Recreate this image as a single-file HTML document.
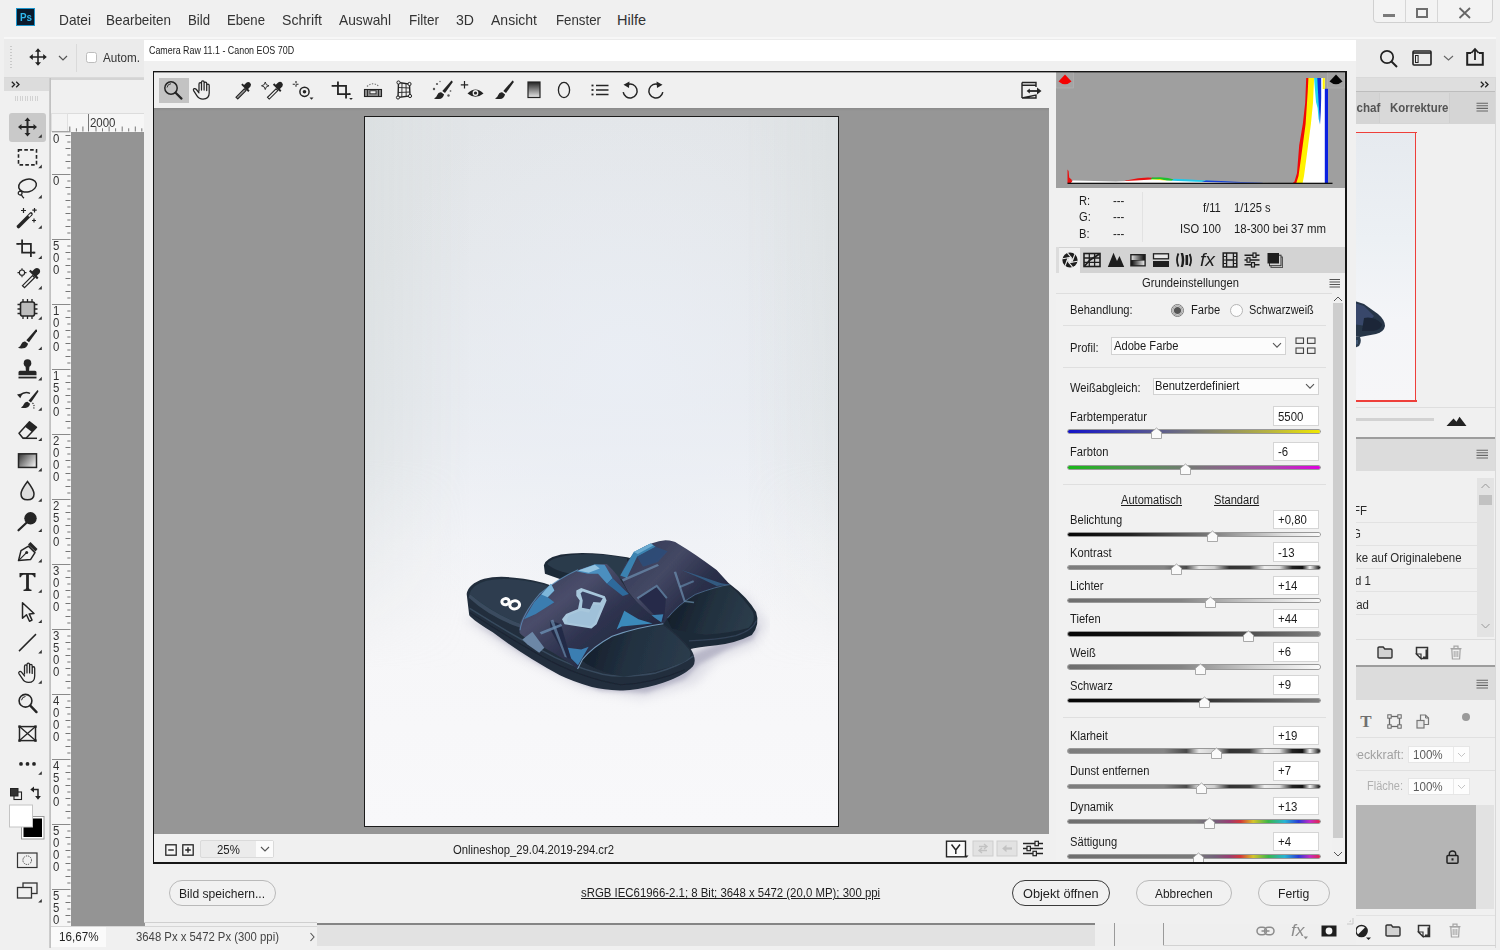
<!DOCTYPE html>
<html><head><meta charset="utf-8"><title>Camera Raw</title>
<style>
*{box-sizing:border-box;margin:0;padding:0}
html,body{width:1500px;height:950px;overflow:hidden;background:#f0f0f0;font-family:"Liberation Sans",sans-serif;color:#1a1a1a}
.a{position:absolute}
.t{position:absolute;white-space:pre;line-height:1;transform-origin:0 50%}
</style></head><body>
<div class="a" style="left:0;top:0;width:1500px;height:950px;background:#f0f0f0;overflow:hidden">
<div class="a" style="left:0px;top:0px;width:1500px;height:38px;background:#f0f0f0;"></div>
<div class="a" style="left:0px;top:37px;width:1500px;height:2px;background:#f7f7f7;"></div>
<div class="a" style="left:16px;top:8px;width:19px;height:18px;background:#0a1a2c;border:1px solid #1b95cc;"></div>
<div class="t" style="left:19.5px;top:11.6px;font-size:11px;color:#30b8ee;font-weight:bold;transform:scaleX(0.892);">Ps</div>
<div class="t" style="left:59.0px;top:13.2px;font-size:14.5px;color:#333;transform:scaleX(0.945);">Datei</div>
<div class="t" style="left:106.0px;top:13.2px;font-size:14.5px;color:#333;transform:scaleX(0.927);">Bearbeiten</div>
<div class="t" style="left:188.0px;top:13.2px;font-size:14.5px;color:#333;transform:scaleX(0.910);">Bild</div>
<div class="t" style="left:227.0px;top:13.2px;font-size:14.5px;color:#333;transform:scaleX(0.906);">Ebene</div>
<div class="t" style="left:282.0px;top:13.2px;font-size:14.5px;color:#333;transform:scaleX(0.973);">Schrift</div>
<div class="t" style="left:339.0px;top:13.2px;font-size:14.5px;color:#333;transform:scaleX(0.949);">Auswahl</div>
<div class="t" style="left:409.0px;top:13.2px;font-size:14.5px;color:#333;transform:scaleX(0.931);">Filter</div>
<div class="t" style="left:456.0px;top:13.2px;font-size:14.5px;color:#333;transform:scaleX(0.971);">3D</div>
<div class="t" style="left:491.0px;top:13.2px;font-size:14.5px;color:#333;transform:scaleX(0.967);">Ansicht</div>
<div class="t" style="left:556.0px;top:13.2px;font-size:14.5px;color:#333;transform:scaleX(0.915);">Fenster</div>
<div class="t" style="left:617.0px;top:13.2px;font-size:14.5px;color:#333;">Hilfe</div>
<div class="a" style="left:1373px;top:-4px;width:120px;height:27px;background:#f3f3f3;border:1px solid #d0d0d0;border-radius:4px;"></div>
<div class="a" style="left:1405px;top:0px;width:1px;height:23px;background:#d6d6d6;"></div>
<div class="a" style="left:1437px;top:0px;width:1px;height:23px;background:#d6d6d6;"></div>
<div class="a" style="left:1383px;top:14px;width:12px;height:3px;background:#7a7a7a;"></div>
<div class="a" style="left:1416px;top:8px;width:12px;height:10px;border:2px solid #6e6e6e;"></div>
<svg class="a" style="left:1458px;top:7px;" width="14" height="12" viewBox="0 0 14 12"><path d="M1.5 1 L12 11 M12 1 L1.5 11" stroke="#666" stroke-width="1.8" fill="none"/></svg>
<div class="a" style="left:4px;top:39px;width:1492px;height:38px;background:#ebebeb;"></div>
<div class="a" style="left:4px;top:77px;width:1492px;height:1px;background:#d9d9d9;"></div>
<div class="a" style="left:10px;top:46px;width:2px;height:24px;background:repeating-linear-gradient(#c9c9c9 0 1px,transparent 1px 3px);"></div>
<svg class="a" style="left:28px;top:47px;" width="20" height="20" viewBox="0 0 20 20"><path d="M10 1.2 L13 4.8 H10.8 V9.2 H15.2 V7 L18.8 10 L15.2 13 V10.8 H10.8 V15.2 H13 L10 18.8 L7 15.2 H9.2 V10.8 H4.8 V13 L1.2 10 L4.8 7 V9.2 H9.2 V4.8 H7 Z" fill="#222"/></svg>
<svg class="a" style="left:58px;top:55px;" width="10" height="7" viewBox="0 0 10 7"><path d="M1 1 L5 5 L9 1" stroke="#555" stroke-width="1.2" fill="none"/></svg>
<div class="a" style="left:76px;top:44px;width:1px;height:28px;background:#dadada;"></div>
<div class="a" style="left:86px;top:52px;width:11px;height:11px;background:#fff;border:1px solid #bdbdbd;border-radius:2.5px;"></div>
<div class="t" style="left:103.0px;top:51.9px;font-size:12.5px;color:#333;transform:scaleX(0.934);">Autom.</div>
<svg class="a" style="left:1378px;top:48px;" width="22" height="22" viewBox="0 0 22 22"><circle cx="9" cy="9" r="6.2" stroke="#222" stroke-width="1.7" fill="none"/><path d="M13.5 13.5 L19 19" stroke="#222" stroke-width="2"/></svg>
<svg class="a" style="left:1412px;top:50px;" width="22" height="16" viewBox="0 0 22 16"><rect x="1" y="1" width="18" height="14" stroke="#222" stroke-width="1.6" fill="none" rx="1"/><path d="M1 3 H19" stroke="#222" stroke-width="1.6"/><rect x="3.5" y="5.5" width="2.6" height="7" fill="none" stroke="#222" stroke-width="1"/></svg>
<svg class="a" style="left:1443px;top:55px;" width="11" height="7" viewBox="0 0 11 7"><path d="M1 1 L5.5 5 L10 1" stroke="#666" stroke-width="1.1" fill="none"/></svg>
<svg class="a" style="left:1465px;top:47px;" width="20" height="20" viewBox="0 0 20 20"><path d="M6 6 H2.2 V17.8 H17.8 V6 H14" stroke="#222" stroke-width="2" fill="none"/><path d="M10 13 V2.5 M6.3 6 L10 2 L13.7 6" stroke="#222" stroke-width="1.8" fill="none"/></svg>
<div class="a" style="left:0px;top:0px;width:4px;height:950px;background:#f0f0f0;"></div>
<div class="a" style="left:1496px;top:0px;width:4px;height:950px;background:#f0f0f0;"></div>
<div class="a" style="left:51px;top:78px;width:94px;height:36px;background:#f0f0f0;"></div>
<div class="a" style="left:51px;top:78px;width:1305px;height:1.5px;background:#d4d4d4;"></div>
<div class="a" style="left:51px;top:113px;width:94px;height:19px;background:#f6f6f6;"></div>
<div class="a" style="left:51px;top:113px;width:94px;height:1px;background:#dcdcdc;"></div>
<div class="a" style="left:51px;top:131px;width:20px;height:796px;background:#f6f6f6;"></div>
<div class="a" style="left:51px;top:113px;width:16.5px;height:18.5px;background:#f3f3f3;border:1px solid #e0e0e0;"></div>
<div class="a" style="left:70.5px;top:131.5px;width:74.5px;height:795px;background:#949494;"></div>
<svg class="a" style="left:51px;top:113px;" width="94" height="814" viewBox="0 0 94 814"><path d="M37.5 1 V18.5" stroke="#777" stroke-width="1"/><path d="M18.8 13.5 V18.5" stroke="#777" stroke-width="1"/><path d="M25.4 15.3 V18.5" stroke="#777" stroke-width="1"/><path d="M31.9 13.5 V18.5" stroke="#777" stroke-width="1"/><path d="M45.0 13.5 V18.5" stroke="#777" stroke-width="1"/><path d="M51.5 15.3 V18.5" stroke="#777" stroke-width="1"/><path d="M58.1 13.5 V18.5" stroke="#777" stroke-width="1"/><path d="M64.6 15.3 V18.5" stroke="#777" stroke-width="1"/><path d="M71.2 13.5 V18.5" stroke="#777" stroke-width="1"/><path d="M77.7 15.3 V18.5" stroke="#777" stroke-width="1"/><path d="M84.3 13.5 V18.5" stroke="#777" stroke-width="1"/><path d="M90.8 15.3 V18.5" stroke="#777" stroke-width="1"/><path d="M1 18.8 H19.5" stroke="#8a8a8a" stroke-width="1"/><path d="M1 61.5 H19.5" stroke="#8a8a8a" stroke-width="1"/><path d="M1 126.5 H19.5" stroke="#8a8a8a" stroke-width="1"/><path d="M1 191.5 H19.5" stroke="#8a8a8a" stroke-width="1"/><path d="M1 256.5 H19.5" stroke="#8a8a8a" stroke-width="1"/><path d="M1 321.5 H19.5" stroke="#8a8a8a" stroke-width="1"/><path d="M1 386.5 H19.5" stroke="#8a8a8a" stroke-width="1"/><path d="M1 451.5 H19.5" stroke="#8a8a8a" stroke-width="1"/><path d="M1 516.5 H19.5" stroke="#8a8a8a" stroke-width="1"/><path d="M1 581.5 H19.5" stroke="#8a8a8a" stroke-width="1"/><path d="M1 646.5 H19.5" stroke="#8a8a8a" stroke-width="1"/><path d="M1 711.5 H19.5" stroke="#8a8a8a" stroke-width="1"/><path d="M1 776.5 H19.5" stroke="#8a8a8a" stroke-width="1"/><path d="M14.5 22.5 H19.5" stroke="#777" stroke-width="1"/><path d="M16.3 29.0 H19.5" stroke="#777" stroke-width="1"/><path d="M14.5 35.5 H19.5" stroke="#777" stroke-width="1"/><path d="M16.3 42.0 H19.5" stroke="#777" stroke-width="1"/><path d="M14.5 48.5 H19.5" stroke="#777" stroke-width="1"/><path d="M16.3 55.0 H19.5" stroke="#777" stroke-width="1"/><path d="M16.3 68.0 H19.5" stroke="#777" stroke-width="1"/><path d="M14.5 74.5 H19.5" stroke="#777" stroke-width="1"/><path d="M16.3 81.0 H19.5" stroke="#777" stroke-width="1"/><path d="M14.5 87.5 H19.5" stroke="#777" stroke-width="1"/><path d="M16.3 94.0 H19.5" stroke="#777" stroke-width="1"/><path d="M14.5 100.5 H19.5" stroke="#777" stroke-width="1"/><path d="M16.3 107.0 H19.5" stroke="#777" stroke-width="1"/><path d="M14.5 113.5 H19.5" stroke="#777" stroke-width="1"/><path d="M16.3 120.0 H19.5" stroke="#777" stroke-width="1"/><path d="M16.3 133.0 H19.5" stroke="#777" stroke-width="1"/><path d="M14.5 139.5 H19.5" stroke="#777" stroke-width="1"/><path d="M16.3 146.0 H19.5" stroke="#777" stroke-width="1"/><path d="M14.5 152.5 H19.5" stroke="#777" stroke-width="1"/><path d="M16.3 159.0 H19.5" stroke="#777" stroke-width="1"/><path d="M14.5 165.5 H19.5" stroke="#777" stroke-width="1"/><path d="M16.3 172.0 H19.5" stroke="#777" stroke-width="1"/><path d="M14.5 178.5 H19.5" stroke="#777" stroke-width="1"/><path d="M16.3 185.0 H19.5" stroke="#777" stroke-width="1"/><path d="M16.3 198.0 H19.5" stroke="#777" stroke-width="1"/><path d="M14.5 204.5 H19.5" stroke="#777" stroke-width="1"/><path d="M16.3 211.0 H19.5" stroke="#777" stroke-width="1"/><path d="M14.5 217.5 H19.5" stroke="#777" stroke-width="1"/><path d="M16.3 224.0 H19.5" stroke="#777" stroke-width="1"/><path d="M14.5 230.5 H19.5" stroke="#777" stroke-width="1"/><path d="M16.3 237.0 H19.5" stroke="#777" stroke-width="1"/><path d="M14.5 243.5 H19.5" stroke="#777" stroke-width="1"/><path d="M16.3 250.0 H19.5" stroke="#777" stroke-width="1"/><path d="M16.3 263.0 H19.5" stroke="#777" stroke-width="1"/><path d="M14.5 269.5 H19.5" stroke="#777" stroke-width="1"/><path d="M16.3 276.0 H19.5" stroke="#777" stroke-width="1"/><path d="M14.5 282.5 H19.5" stroke="#777" stroke-width="1"/><path d="M16.3 289.0 H19.5" stroke="#777" stroke-width="1"/><path d="M14.5 295.5 H19.5" stroke="#777" stroke-width="1"/><path d="M16.3 302.0 H19.5" stroke="#777" stroke-width="1"/><path d="M14.5 308.5 H19.5" stroke="#777" stroke-width="1"/><path d="M16.3 315.0 H19.5" stroke="#777" stroke-width="1"/><path d="M16.3 328.0 H19.5" stroke="#777" stroke-width="1"/><path d="M14.5 334.5 H19.5" stroke="#777" stroke-width="1"/><path d="M16.3 341.0 H19.5" stroke="#777" stroke-width="1"/><path d="M14.5 347.5 H19.5" stroke="#777" stroke-width="1"/><path d="M16.3 354.0 H19.5" stroke="#777" stroke-width="1"/><path d="M14.5 360.5 H19.5" stroke="#777" stroke-width="1"/><path d="M16.3 367.0 H19.5" stroke="#777" stroke-width="1"/><path d="M14.5 373.5 H19.5" stroke="#777" stroke-width="1"/><path d="M16.3 380.0 H19.5" stroke="#777" stroke-width="1"/><path d="M16.3 393.0 H19.5" stroke="#777" stroke-width="1"/><path d="M14.5 399.5 H19.5" stroke="#777" stroke-width="1"/><path d="M16.3 406.0 H19.5" stroke="#777" stroke-width="1"/><path d="M14.5 412.5 H19.5" stroke="#777" stroke-width="1"/><path d="M16.3 419.0 H19.5" stroke="#777" stroke-width="1"/><path d="M14.5 425.5 H19.5" stroke="#777" stroke-width="1"/><path d="M16.3 432.0 H19.5" stroke="#777" stroke-width="1"/><path d="M14.5 438.5 H19.5" stroke="#777" stroke-width="1"/><path d="M16.3 445.0 H19.5" stroke="#777" stroke-width="1"/><path d="M16.3 458.0 H19.5" stroke="#777" stroke-width="1"/><path d="M14.5 464.5 H19.5" stroke="#777" stroke-width="1"/><path d="M16.3 471.0 H19.5" stroke="#777" stroke-width="1"/><path d="M14.5 477.5 H19.5" stroke="#777" stroke-width="1"/><path d="M16.3 484.0 H19.5" stroke="#777" stroke-width="1"/><path d="M14.5 490.5 H19.5" stroke="#777" stroke-width="1"/><path d="M16.3 497.0 H19.5" stroke="#777" stroke-width="1"/><path d="M14.5 503.5 H19.5" stroke="#777" stroke-width="1"/><path d="M16.3 510.0 H19.5" stroke="#777" stroke-width="1"/><path d="M16.3 523.0 H19.5" stroke="#777" stroke-width="1"/><path d="M14.5 529.5 H19.5" stroke="#777" stroke-width="1"/><path d="M16.3 536.0 H19.5" stroke="#777" stroke-width="1"/><path d="M14.5 542.5 H19.5" stroke="#777" stroke-width="1"/><path d="M16.3 549.0 H19.5" stroke="#777" stroke-width="1"/><path d="M14.5 555.5 H19.5" stroke="#777" stroke-width="1"/><path d="M16.3 562.0 H19.5" stroke="#777" stroke-width="1"/><path d="M14.5 568.5 H19.5" stroke="#777" stroke-width="1"/><path d="M16.3 575.0 H19.5" stroke="#777" stroke-width="1"/><path d="M16.3 588.0 H19.5" stroke="#777" stroke-width="1"/><path d="M14.5 594.5 H19.5" stroke="#777" stroke-width="1"/><path d="M16.3 601.0 H19.5" stroke="#777" stroke-width="1"/><path d="M14.5 607.5 H19.5" stroke="#777" stroke-width="1"/><path d="M16.3 614.0 H19.5" stroke="#777" stroke-width="1"/><path d="M14.5 620.5 H19.5" stroke="#777" stroke-width="1"/><path d="M16.3 627.0 H19.5" stroke="#777" stroke-width="1"/><path d="M14.5 633.5 H19.5" stroke="#777" stroke-width="1"/><path d="M16.3 640.0 H19.5" stroke="#777" stroke-width="1"/><path d="M16.3 653.0 H19.5" stroke="#777" stroke-width="1"/><path d="M14.5 659.5 H19.5" stroke="#777" stroke-width="1"/><path d="M16.3 666.0 H19.5" stroke="#777" stroke-width="1"/><path d="M14.5 672.5 H19.5" stroke="#777" stroke-width="1"/><path d="M16.3 679.0 H19.5" stroke="#777" stroke-width="1"/><path d="M14.5 685.5 H19.5" stroke="#777" stroke-width="1"/><path d="M16.3 692.0 H19.5" stroke="#777" stroke-width="1"/><path d="M14.5 698.5 H19.5" stroke="#777" stroke-width="1"/><path d="M16.3 705.0 H19.5" stroke="#777" stroke-width="1"/><path d="M16.3 718.0 H19.5" stroke="#777" stroke-width="1"/><path d="M14.5 724.5 H19.5" stroke="#777" stroke-width="1"/><path d="M16.3 731.0 H19.5" stroke="#777" stroke-width="1"/><path d="M14.5 737.5 H19.5" stroke="#777" stroke-width="1"/><path d="M16.3 744.0 H19.5" stroke="#777" stroke-width="1"/><path d="M14.5 750.5 H19.5" stroke="#777" stroke-width="1"/><path d="M16.3 757.0 H19.5" stroke="#777" stroke-width="1"/><path d="M14.5 763.5 H19.5" stroke="#777" stroke-width="1"/><path d="M16.3 770.0 H19.5" stroke="#777" stroke-width="1"/><path d="M16.3 783.0 H19.5" stroke="#777" stroke-width="1"/><path d="M14.5 789.5 H19.5" stroke="#777" stroke-width="1"/><path d="M16.3 796.0 H19.5" stroke="#777" stroke-width="1"/><path d="M14.5 802.5 H19.5" stroke="#777" stroke-width="1"/><path d="M16.3 809.0 H19.5" stroke="#777" stroke-width="1"/></svg>
<div class="t" style="left:89.5px;top:117.1px;font-size:12px;color:#333;transform:scaleX(0.955);">2000</div>
<div class="t" style="left:52.5px;top:132.7px;font-size:12px;color:#333;transform:scaleX(0.950);">0</div>
<div class="t" style="left:52.5px;top:175.4px;font-size:12px;color:#333;transform:scaleX(0.950);">0</div>
<div class="t" style="left:52.5px;top:240.4px;font-size:12px;color:#333;transform:scaleX(0.950);">5</div>
<div class="t" style="left:52.5px;top:252.4px;font-size:12px;color:#333;transform:scaleX(0.950);">0</div>
<div class="t" style="left:52.5px;top:264.4px;font-size:12px;color:#333;transform:scaleX(0.950);">0</div>
<div class="t" style="left:52.5px;top:305.4px;font-size:12px;color:#333;transform:scaleX(0.950);">1</div>
<div class="t" style="left:52.5px;top:317.4px;font-size:12px;color:#333;transform:scaleX(0.950);">0</div>
<div class="t" style="left:52.5px;top:329.4px;font-size:12px;color:#333;transform:scaleX(0.950);">0</div>
<div class="t" style="left:52.5px;top:341.4px;font-size:12px;color:#333;transform:scaleX(0.950);">0</div>
<div class="t" style="left:52.5px;top:370.4px;font-size:12px;color:#333;transform:scaleX(0.950);">1</div>
<div class="t" style="left:52.5px;top:382.4px;font-size:12px;color:#333;transform:scaleX(0.950);">5</div>
<div class="t" style="left:52.5px;top:394.4px;font-size:12px;color:#333;transform:scaleX(0.950);">0</div>
<div class="t" style="left:52.5px;top:406.4px;font-size:12px;color:#333;transform:scaleX(0.950);">0</div>
<div class="t" style="left:52.5px;top:435.4px;font-size:12px;color:#333;transform:scaleX(0.950);">2</div>
<div class="t" style="left:52.5px;top:447.4px;font-size:12px;color:#333;transform:scaleX(0.950);">0</div>
<div class="t" style="left:52.5px;top:459.4px;font-size:12px;color:#333;transform:scaleX(0.950);">0</div>
<div class="t" style="left:52.5px;top:471.4px;font-size:12px;color:#333;transform:scaleX(0.950);">0</div>
<div class="t" style="left:52.5px;top:500.4px;font-size:12px;color:#333;transform:scaleX(0.950);">2</div>
<div class="t" style="left:52.5px;top:512.4px;font-size:12px;color:#333;transform:scaleX(0.950);">5</div>
<div class="t" style="left:52.5px;top:524.4px;font-size:12px;color:#333;transform:scaleX(0.950);">0</div>
<div class="t" style="left:52.5px;top:536.4px;font-size:12px;color:#333;transform:scaleX(0.950);">0</div>
<div class="t" style="left:52.5px;top:565.4px;font-size:12px;color:#333;transform:scaleX(0.950);">3</div>
<div class="t" style="left:52.5px;top:577.4px;font-size:12px;color:#333;transform:scaleX(0.950);">0</div>
<div class="t" style="left:52.5px;top:589.4px;font-size:12px;color:#333;transform:scaleX(0.950);">0</div>
<div class="t" style="left:52.5px;top:601.4px;font-size:12px;color:#333;transform:scaleX(0.950);">0</div>
<div class="t" style="left:52.5px;top:630.4px;font-size:12px;color:#333;transform:scaleX(0.950);">3</div>
<div class="t" style="left:52.5px;top:642.4px;font-size:12px;color:#333;transform:scaleX(0.950);">5</div>
<div class="t" style="left:52.5px;top:654.4px;font-size:12px;color:#333;transform:scaleX(0.950);">0</div>
<div class="t" style="left:52.5px;top:666.4px;font-size:12px;color:#333;transform:scaleX(0.950);">0</div>
<div class="t" style="left:52.5px;top:695.4px;font-size:12px;color:#333;transform:scaleX(0.950);">4</div>
<div class="t" style="left:52.5px;top:707.4px;font-size:12px;color:#333;transform:scaleX(0.950);">0</div>
<div class="t" style="left:52.5px;top:719.4px;font-size:12px;color:#333;transform:scaleX(0.950);">0</div>
<div class="t" style="left:52.5px;top:731.4px;font-size:12px;color:#333;transform:scaleX(0.950);">0</div>
<div class="t" style="left:52.5px;top:760.4px;font-size:12px;color:#333;transform:scaleX(0.950);">4</div>
<div class="t" style="left:52.5px;top:772.4px;font-size:12px;color:#333;transform:scaleX(0.950);">5</div>
<div class="t" style="left:52.5px;top:784.4px;font-size:12px;color:#333;transform:scaleX(0.950);">0</div>
<div class="t" style="left:52.5px;top:796.4px;font-size:12px;color:#333;transform:scaleX(0.950);">0</div>
<div class="t" style="left:52.5px;top:825.4px;font-size:12px;color:#333;transform:scaleX(0.950);">5</div>
<div class="t" style="left:52.5px;top:837.4px;font-size:12px;color:#333;transform:scaleX(0.950);">0</div>
<div class="t" style="left:52.5px;top:849.4px;font-size:12px;color:#333;transform:scaleX(0.950);">0</div>
<div class="t" style="left:52.5px;top:861.4px;font-size:12px;color:#333;transform:scaleX(0.950);">0</div>
<div class="t" style="left:52.5px;top:890.4px;font-size:12px;color:#333;transform:scaleX(0.950);">5</div>
<div class="t" style="left:52.5px;top:902.4px;font-size:12px;color:#333;transform:scaleX(0.950);">5</div>
<div class="t" style="left:52.5px;top:914.4px;font-size:12px;color:#333;transform:scaleX(0.950);">0</div>
<div class="a" style="left:51px;top:926.5px;width:1305px;height:21px;background:#f0f0f0;"></div>
<div class="a" style="left:51px;top:926.5px;width:55px;height:21px;background:#fafafa;"></div>
<div class="t" style="left:59.0px;top:930.5px;font-size:12.5px;color:#222;transform:scaleX(0.932);">16,67%</div>
<div class="t" style="left:135.5px;top:930.7px;font-size:12px;color:#444;transform:scaleX(0.944);">3648 Px x 5472 Px (300 ppi)</div>
<svg class="a" style="left:309px;top:932px;" width="7" height="10" viewBox="0 0 7 10"><path d="M1.5 1 L5 5 L1.5 9" stroke="#555" stroke-width="1.1" fill="none"/></svg>
<div class="a" style="left:51px;top:926px;width:1305px;height:1px;background:#d6d6d6;"></div>
<div class="a" style="left:0px;top:947px;width:1500px;height:3px;background:#f0f0f0;"></div>
<div class="a" style="left:4px;top:78px;width:46px;height:870px;background:#f0f0f0;"></div>
<div class="a" style="left:4px;top:78px;width:46px;height:13px;background:#dcdcdc;"></div>
<svg class="a" style="left:10.5px;top:81px;" width="10" height="7" viewBox="0 0 10 7"><path d="M0.8 0.8 L3.6 3.5 L0.8 6.2 M5.2 0.8 L8 3.5 L5.2 6.2" stroke="#222" stroke-width="1.3" fill="none"/></svg>
<div class="a" style="left:15px;top:96px;width:23px;height:5px;background:repeating-linear-gradient(90deg,#d2d2d2 0 1px,transparent 1px 2.5px);"></div>
<div class="a" style="left:49px;top:78px;width:2px;height:870px;background:linear-gradient(90deg,#d0d0d0,#bdbdbd);"></div>
<div class="a" style="left:8.5px;top:112.5px;width:37.5px;height:29px;background:#c9c9c9;border-radius:3px;"></div>
<svg class="a" style="left:4px;top:78px;" width="46" height="870" viewBox="0 0 46 870"><g transform="translate(23.5,49)"><path d="M0 -9.5 L3 -6 H1 V-1 H6 V-3 L9.5 0 L6 3 V1 H1 V6 H3 L0 9.5 L-3 6 H-1 V1 H-6 V3 L-9.5 0 L-6 -3 V-1 H-1 V-6 H-3 Z" fill="#252525"/></g><path d="M37.8 59.8 L37.8 56.2 L34.2 59.8 Z" fill="#333"/><g transform="translate(23.5,79.33)"><rect x="-9" y="-7.5" width="18" height="15" fill="none" stroke="#252525" stroke-width="1.6" stroke-dasharray="3.6 2.2"/></g><path d="M37.8 90.13 L37.8 86.53 L34.2 90.13 Z" fill="#333"/><g transform="translate(23.5,109.66)"><ellipse cx="0.5" cy="-2" rx="9" ry="6.3" transform="rotate(-14)" fill="none" stroke="#252525" stroke-width="1.5"/><path d="M-7 3.5 Q-10 4 -9 6.5 Q-7 8.5 -5.5 6 Q-5 4 -7 3.5 M-6 7 Q-5 9.5 -3.5 10.5" fill="none" stroke="#252525" stroke-width="1.3"/></g><path d="M37.8 120.46 L37.8 116.86 L34.2 120.46 Z" fill="#333"/><g transform="translate(23.5,139.99)"><path d="M-9 8.5 L3.5 -4" stroke="#252525" stroke-width="3.6" stroke-linecap="round"/><path d="M1.2 -1.6 L3.6 -4" stroke="#f0f0f0" stroke-width="1.6"/><path d="M-4 -10 V-5 M-6.5 -7.5 H-1.5 M7 -10 V-5.6 M4.8 -7.8 H9.2 M6.5 0.5 V4.5 M4.5 2.5 H8.5" stroke="#252525" stroke-width="1.2"/></g><path d="M37.8 150.79 L37.8 147.19 L34.2 150.79 Z" fill="#333"/><g transform="translate(22.5,170.32)"><g transform="scale(0.88)"><path d="M-5 -10 V5 H10 M-10 -5 H5 V10" fill="none" stroke="#252525" stroke-width="2"/><path d="M-11.5 -5 H-9 M7.5 5 H9" stroke="#252525" stroke-width="2"/></g></g><path d="M37.8 181.12 L37.8 177.52 L34.2 181.12 Z" fill="#333"/><g transform="translate(26,200.65)"><path d="M-5.5 9 L-7.5 7 L2.5 -3 L4.5 -1 Z" fill="#f0f0f0" stroke="#252525" stroke-width="1.3"/><path d="M1 -5.5 L7 0.5 L8.5 -1 L6.8 -2.8 L9.5 -5.5 Q11 -8 9 -10 Q7 -11.5 4.8 -10 L2.2 -7.4 L0.5 -9 L-1 -7.5 Z" fill="#252525"/><circle cx="-8" cy="-6" r="2.6" fill="none" stroke="#252525" stroke-width="1.1"/><path d="M-8 -10.5 V-8.6 M-8 -3.4 V-1.5 M-12.5 -6 H-10.6 M-5.4 -6 H-3.5" stroke="#252525" stroke-width="1.1"/></g><path d="M37.8 211.45 L37.8 207.85 L34.2 211.45 Z" fill="#333"/><g transform="translate(23.5,230.98)"><rect x="-7" y="-7" width="14" height="14" rx="2" fill="#bdbdbd" stroke="#252525" stroke-width="1.6"/><path d="M-4.5 -10 V-7 M0 -10 V-7 M4.5 -10 V-7 M-4.5 7 V10 M0 7 V10 M4.5 7 V10 M-10 -4.5 H-7 M-10 0 H-7 M-10 4.5 H-7 M7 -4.5 H10 M7 0 H10 M7 4.5 H10" stroke="#252525" stroke-width="1.3"/></g><path d="M37.8 241.78 L37.8 238.18 L34.2 241.78 Z" fill="#333"/><g transform="translate(23.5,261.31)"><path d="M8.5 -10 Q10 -9.5 9.5 -8 L1.5 3 L-1.2 1 Z" fill="#252525"/><path d="M-2.3 2.2 L0.6 4.4 Q-0.5 8.5 -4.5 9 Q-7.5 9.3 -9.5 8.5 Q-6.8 7 -6.3 5 Q-5.2 1.8 -2.3 2.2 Z" fill="#252525"/></g><path d="M37.8 272.11 L37.8 268.51 L34.2 272.11 Z" fill="#333"/><g transform="translate(23.5,291.64)"><circle cx="0" cy="-6.5" r="3.8" fill="#252525"/><path d="M-2 -4 H2 L1.6 1 H7.5 Q9 1 9 2.5 V5.5 H-9 V2.5 Q-9 1 -7.5 1 H-1.6 Z" fill="#252525"/><rect x="-9" y="7" width="18" height="1.8" fill="#252525"/></g><path d="M37.8 302.44 L37.8 298.84 L34.2 302.44 Z" fill="#333"/><g transform="translate(23.5,321.97)"><path d="M10 -10 Q11.3 -9.5 10.8 -8.2 L3.5 2.5 L1 0.7 Z" fill="#252525"/><path d="M0 1.8 L2.6 3.8 Q1.6 7.5 -2 8 Q-4.8 8.3 -6.6 7.5 Q-4.2 6.2 -3.7 4.4 Q-2.7 1.5 0 1.8 Z" fill="#252525"/><path d="M-7.5 -4.5 Q-3 -9 2.5 -6.5" fill="none" stroke="#252525" stroke-width="1.4"/><path d="M-10.5 -5.5 L-5 -6.8 L-7.2 -1.8 Z" fill="#252525"/><path d="M5 3 Q7.5 5.5 6 9" fill="none" stroke="#252525" stroke-width="1.1" stroke-dasharray="1.2 1.2"/></g><path d="M37.8 332.77 L37.8 329.17 L34.2 332.77 Z" fill="#333"/><g transform="translate(23.5,352.3)"><path d="M-8.5 3 L2 -8.5 L9 -3 L-1.5 8 H-4.5 Z" fill="#f0f0f0" stroke="#252525" stroke-width="1.5" stroke-linejoin="round"/><path d="M2 -8.5 L9 -3 L4.5 1.8 L-2.5 -3.6 Z" fill="#252525"/><path d="M-4.5 8 H9.5" stroke="#252525" stroke-width="1.5"/></g><path d="M37.8 363.1 L37.8 359.5 L34.2 363.1 Z" fill="#333"/><g transform="translate(23.5,382.63)"><defs><linearGradient id="tg" x1="0" x2="1" y1="0" y2="0.6"><stop offset="0" stop-color="#333"/><stop offset="1" stop-color="#e2e2e2"/></linearGradient></defs><rect x="-9" y="-6.8" width="18" height="13.6" fill="url(#tg)" stroke="#252525" stroke-width="1.5"/></g><path d="M37.8 393.43 L37.8 389.83 L34.2 393.43 Z" fill="#333"/><g transform="translate(23.5,412.96)"><path d="M0 -9.5 Q6.5 -1 6.5 3 Q6.5 8.8 0 8.8 Q-6.5 8.8 -6.5 3 Q-6.5 -1 0 -9.5 Z" fill="#dedede" stroke="#252525" stroke-width="1.5"/></g><path d="M37.8 423.76 L37.8 420.16 L34.2 423.76 Z" fill="#333"/><g transform="translate(23.5,443.29)"><circle cx="3" cy="-3" r="6.2" fill="#252525"/><path d="M-1 1.5 L-9 9" stroke="#252525" stroke-width="2.2" stroke-linecap="round"/></g><path d="M37.8 454.09 L37.8 450.49 L34.2 454.09 Z" fill="#333"/><g transform="translate(23.5,473.62)"><path d="M-9 9 L-6.5 -1 L1 -5.5 L7.5 1 L3 8 Z" fill="#f0f0f0" stroke="#252525" stroke-width="1.5" stroke-linejoin="round"/><path d="M-9 9 L-1.5 1.5" stroke="#252525" stroke-width="1.2"/><circle cx="-0.8" cy="0.8" r="1.5" fill="#252525"/><path d="M0.5 -7 L3 -9.5 L10 -2.5 L8 0 Z" fill="#252525"/></g><path d="M37.8 484.42 L37.8 480.82 L34.2 484.42 Z" fill="#333"/><g transform="translate(23.5,503.95)"><path d="M-8 -9 H8 V-4.6 H6.6 Q6.3 -7.2 4 -7.2 H1.4 V6 Q1.4 7.6 4 7.7 V9 H-4 V7.7 Q-1.4 7.6 -1.4 6 V-7.2 H-4 Q-6.3 -7.2 -6.6 -4.6 H-8 Z" fill="#252525"/></g><path d="M37.8 514.75 L37.8 511.15 L34.2 514.75 Z" fill="#333"/><g transform="translate(23.5,534.28)"><path d="M-5 -9.5 L-5 6 L-1 2.5 L2 9 L4.5 7.8 L1.7 1.6 L6.5 1.2 Z" fill="#f0f0f0" stroke="#252525" stroke-width="1.5" stroke-linejoin="round"/></g><path d="M37.8 545.08 L37.8 541.48 L34.2 545.08 Z" fill="#333"/><g transform="translate(23.5,564.61)"><path d="M-8.5 8.5 L8.5 -8.5" stroke="#252525" stroke-width="1.5"/></g><path d="M37.8 575.41 L37.8 571.81 L34.2 575.41 Z" fill="#333"/><g transform="translate(23.5,594.94)"><path d="M-3 1 V-6.5 Q-3 -8 -1.7 -8 Q-0.5 -8 -0.5 -6.5 V-8.2 Q-0.5 -9.8 0.8 -9.8 Q2.1 -9.8 2.1 -8.2 V-7 Q2.1 -8.6 3.4 -8.6 Q4.7 -8.6 4.7 -7 V-4.8 Q4.7 -6.2 5.9 -6.2 Q7.2 -6.2 7.2 -4.8 V3 Q7.2 9.5 1 9.5 Q-3 9.5 -5 6 L-8.6 0.6 Q-9.2 -0.8 -8 -1.4 Q-6.8 -1.8 -5.8 -0.6 L-3 3 M-0.5 -6.5 V0 M2.1 -7 V0 M4.7 -4.8 V0.5" fill="none" stroke="#252525" stroke-width="1.3" stroke-linejoin="round" stroke-linecap="round"/></g><path d="M37.8 605.74 L37.8 602.14 L34.2 605.74 Z" fill="#333"/><g transform="translate(23.5,625.27)"><circle cx="-2" cy="-2.5" r="6.4" fill="none" stroke="#252525" stroke-width="1.6"/><path d="M2.8 2.4 L9 8.8" stroke="#252525" stroke-width="2.4" stroke-linecap="round"/><path d="M-6 -3 Q-5.5 -6.5 -2 -6.8" fill="none" stroke="#252525" stroke-width="1"/></g><g transform="translate(23.5,655.6)"><rect x="-8" y="-7" width="16" height="14" fill="none" stroke="#252525" stroke-width="1.5"/><path d="M-8 -7 L8 7 M8 -7 L-8 7" stroke="#252525" stroke-width="1.3"/><rect x="-9.2" y="-8.2" width="2.4" height="2.4" fill="#252525"/><rect x="6.8" y="-8.2" width="2.4" height="2.4" fill="#252525"/><rect x="-9.2" y="5.8" width="2.4" height="2.4" fill="#252525"/><rect x="6.8" y="5.8" width="2.4" height="2.4" fill="#252525"/></g><g transform="translate(23.5,685.93)"><circle cx="-6.5" cy="0" r="1.9" fill="#252525"/><circle cx="0" cy="0" r="1.9" fill="#252525"/><circle cx="6.5" cy="0" r="1.9" fill="#252525"/></g><path d="M37.8 696.73 L37.8 693.13 L34.2 696.73 Z" fill="#333"/><rect x="10" y="714" width="7.5" height="7.5" fill="#f0f0f0" stroke="#222" stroke-width="1.1"/><rect x="6.5" y="710.5" width="7.5" height="7.5" fill="#333" stroke="#222" stroke-width="1"/><path d="M29.5 711.5 H34 V719" fill="none" stroke="#222" stroke-width="1.5"/><path d="M26.3 711.5 L30 708.6 V714.4 Z M34 721.8 L31.1 718 H36.9 Z" fill="#222"/><rect x="17.5" y="738.5" width="22.5" height="22.5" fill="#fff" stroke="#9a9a9a" stroke-width="1"/><rect x="19.5" y="740.5" width="18.5" height="18.5" fill="#000"/><rect x="5.5" y="727" width="23" height="22" fill="#fff" stroke="#c4c4c4" stroke-width="1"/><rect x="13.5" y="775" width="19.5" height="14.5" fill="none" stroke="#333" stroke-width="1.2"/><circle cx="23.2" cy="782.2" r="4.3" fill="none" stroke="#333" stroke-width="0.9" stroke-dasharray="1.3 1"/><rect x="19" y="805" width="14" height="10.5" fill="#f0f0f0" stroke="#333" stroke-width="1.3"/><rect x="13.5" y="809.5" width="14" height="10.5" fill="#f0f0f0" stroke="#333" stroke-width="1.3"/><path d="M37.8 824.5 L37.8 820.9 L34.2 824.5 Z" fill="#333"/></svg>
<div class="a" style="left:1356px;top:78px;width:140px;height:870px;background:#f0f0f0;"></div>
<div class="a" style="left:1494.5px;top:78px;width:1.5px;height:870px;background:#d9d9d9;"></div>
<div class="a" style="left:1356px;top:78px;width:139px;height:13px;background:#dedede;"></div>
<svg class="a" style="left:1479.5px;top:81px;" width="10" height="7" viewBox="0 0 10 7"><path d="M0.8 0.8 L3.6 3.5 L0.8 6.2 M5.2 0.8 L8 3.5 L5.2 6.2" stroke="#222" stroke-width="1.3" fill="none"/></svg>
<div class="a" style="left:1356px;top:90.5px;width:139px;height:1.5px;background:#bdbdbd;"></div>
<div class="a" style="left:1356px;top:92px;width:139px;height:32px;background:#d5d5d5;"></div>
<div class="a" style="left:1380px;top:93px;width:69px;height:30px;background:#d9d9d9;"></div>
<div class="a" style="left:1379.3px;top:93px;width:1px;height:30px;background:#cfcfcf;"></div>
<div class="a" style="left:1449px;top:93px;width:1px;height:30px;background:#cfcfcf;"></div>
<div class="a" style="left:1356px;top:92px;width:30px;height:32px;overflow:hidden"><div class="t" style="left:-6.0px;top:9.7px;font-size:12.5px;color:#555;font-weight:bold;transform:scaleX(0.930);">schaf</div>
</div>
<div class="t" style="left:1389.8px;top:101.7px;font-size:12.5px;color:#555;font-weight:bold;transform:scaleX(0.915);">Korrekture</div>
<svg class="a" style="left:1476px;top:102px;" width="13" height="10" viewBox="0 0 13 10"><path d="M0.5 1.2 H12 M0.5 3.8 H12 M0.5 6.4 H12 M0.5 9 H12" stroke="#666" stroke-width="1.1"/></svg>
<div class="a" style="left:1356px;top:131.5px;width:60px;height:270px;overflow:hidden;background:linear-gradient(180deg,#e6eaef 0%,#ecf0f4 40%,#f4f5f8 70%,#f6f6f8 100%)"><svg class="a" style="left:-4px;top:164px" width="36" height="56" viewBox="0 0 36 56"><defs><filter id="nb"><feGaussianBlur stdDeviation="0.5"/></filter></defs><g filter="url(#nb)"><path d="M0 4 L12 8 L26 18 Q33 24 33 30 Q32 36 24 38 L8 41 L0 40 Z" fill="#253447"/><path d="M0 6 L12 10 L22 20 L14 30 L0 28 Z" fill="#37476a"/><path d="M12 22 Q22 20 30 28 Q30 33 22 35 L10 35 Z" fill="#1c2838"/><path d="M0 40 L8 41 Q10 46 7 50 L0 53 Z" fill="#2a3a4d"/><path d="M0 44 L6 44 L6 48 L0 50 Z" fill="#3f5673"/></g></svg></div>
<div class="a" style="left:1356px;top:131.5px;width:60.5px;height:1.6px;background:#ee3f3a;"></div>
<div class="a" style="left:1356px;top:400px;width:60.5px;height:1.6px;background:#ee3f3a;"></div>
<div class="a" style="left:1414.8px;top:131.5px;width:1.7px;height:270px;background:#ee3f3a;"></div>
<div class="a" style="left:1356px;top:406.5px;width:139px;height:1px;background:#dedede;"></div>
<div class="a" style="left:1356px;top:417.5px;width:78px;height:3px;background:#d2d2d2;"></div>
<svg class="a" style="left:1446px;top:415.5px;" width="21" height="11" viewBox="0 0 21 11"><path d="M0.5 10 L7.5 2.5 L10.5 5.8 L13.5 0.8 L20.5 10 Z" fill="#222"/></svg>
<div class="a" style="left:1356px;top:436.5px;width:139px;height:2px;background:#9d9d9d;"></div>
<div class="a" style="left:1356px;top:438.5px;width:139px;height:32.5px;background:#dcdcdc;"></div>
<svg class="a" style="left:1476px;top:449px;" width="13" height="10" viewBox="0 0 13 10"><path d="M0.5 1.2 H12 M0.5 3.8 H12 M0.5 6.4 H12 M0.5 9 H12" stroke="#666" stroke-width="1.1"/></svg>
<div class="a" style="left:1477px;top:478px;width:17px;height:159px;background:#e3e3e3;"></div>
<svg class="a" style="left:1480px;top:482px;" width="11" height="8" viewBox="0 0 11 8"><path d="M1.5 6 L5.5 2 L9.5 6" stroke="#999" stroke-width="1" fill="none"/></svg>
<div class="a" style="left:1479px;top:495px;width:12.5px;height:9.5px;background:#c2c2c2;"></div>
<svg class="a" style="left:1480px;top:622px;" width="11" height="8" viewBox="0 0 11 8"><path d="M1.5 2 L5.5 6 L9.5 2" stroke="#999" stroke-width="1" fill="none"/></svg>
<div class="a" style="left:1356px;top:478px;width:121px;height:160px;overflow:hidden"><div class="t" style="left:-3.5px;top:26.5px;font-size:12.5px;color:#2a2a2a;transform:scaleX(0.915);">FF</div>
<div class="t" style="left:-4.5px;top:49.5px;font-size:12.5px;color:#2a2a2a;transform:scaleX(0.915);">G</div>
<div class="t" style="left:0.0px;top:73.5px;font-size:12.5px;color:#2a2a2a;transform:scaleX(0.915);">ke auf Originalebene</div>
<div class="t" style="left:-1.5px;top:96.5px;font-size:12.5px;color:#2a2a2a;transform:scaleX(0.915);">d 1</div>
<div class="t" style="left:-3.0px;top:120.5px;font-size:12.5px;color:#2a2a2a;transform:scaleX(0.915);">fad</div>
</div>
<div class="a" style="left:1356px;top:521.7px;width:121px;height:1px;background:#e2e2e2;"></div>
<div class="a" style="left:1356px;top:544.8px;width:121px;height:1px;background:#e2e2e2;"></div>
<div class="a" style="left:1356px;top:568px;width:121px;height:1px;background:#e2e2e2;"></div>
<div class="a" style="left:1356px;top:591px;width:121px;height:1px;background:#e2e2e2;"></div>
<div class="a" style="left:1356px;top:614.3px;width:121px;height:1px;background:#e2e2e2;"></div>
<div class="a" style="left:1356px;top:638.5px;width:139px;height:1px;background:#dcdcdc;"></div>
<svg class="a" style="left:1376.5px;top:646px;" width="16" height="13" viewBox="0 0 16 13"><path d="M1 2.2 Q1 1 2.2 1 H6.2 L7.8 3 H13.8 Q15 3 15 4.2 V11 Q15 12 13.8 12 H2.2 Q1 12 1 11 Z" fill="#d2d2d2" stroke="#333" stroke-width="1.4"/></svg>
<svg class="a" style="left:1414.5px;top:645.5px;" width="14" height="14" viewBox="0 0 14 14"><path d="M1.5 1.5 H12.5 V12.5 H6 L1.5 8 Z" fill="none" stroke="#333" stroke-width="1.5"/><path d="M1.5 8 H6 V12.5 Z" fill="#f6f6f6" stroke="#333" stroke-width="1.2"/><path d="M10.5 3.5 H12.5 V12.5 H8 V10.5 H10.5 Z" fill="#333"/></svg>
<svg class="a" style="left:1449.5px;top:645px;" width="12" height="15" viewBox="0 0 12 15"><path d="M1.8 4 H10.2 L9.6 14 H2.4 Z" fill="none" stroke="#a5a5a5" stroke-width="1.2"/><path d="M0.5 3.6 H11.5 M4 3.2 V1.2 H8 V3.2" fill="none" stroke="#a5a5a5" stroke-width="1.2"/><path d="M4.2 6 V12 M6 6 V12 M7.8 6 V12" stroke="#a5a5a5" stroke-width="1"/></svg>
<div class="a" style="left:1356px;top:664.5px;width:139px;height:2px;background:#9d9d9d;"></div>
<div class="a" style="left:1356px;top:666.5px;width:139px;height:33px;background:#dcdcdc;"></div>
<svg class="a" style="left:1476px;top:679px;" width="13" height="10" viewBox="0 0 13 10"><path d="M0.5 1.2 H12 M0.5 3.8 H12 M0.5 6.4 H12 M0.5 9 H12" stroke="#666" stroke-width="1.1"/></svg>
<div class="t" style="left:1360.3px;top:712.5px;font-size:17px;color:#6f6f6f;font-weight:bold;font-family:'Liberation Serif',serif;">T</div>
<svg class="a" style="left:1386.5px;top:713.5px;" width="15" height="15" viewBox="0 0 15 15"><rect x="2.5" y="2.5" width="10" height="10" fill="none" stroke="#666" stroke-width="1.3"/><rect x="0.8" y="0.8" width="3.4" height="3.4" fill="#f0f0f0" stroke="#666"/><rect x="10.8" y="0.8" width="3.4" height="3.4" fill="#f0f0f0" stroke="#666"/><rect x="0.8" y="10.8" width="3.4" height="3.4" fill="#f0f0f0" stroke="#666"/><rect x="10.8" y="10.8" width="3.4" height="3.4" fill="#f0f0f0" stroke="#666"/></svg>
<svg class="a" style="left:1416px;top:713.5px;" width="14" height="15" viewBox="0 0 14 15"><path d="M4.5 1 H9.5 L12.5 4 V10.5 H4.5 Z" fill="#f0f0f0" stroke="#777" stroke-width="1.2"/><rect x="1" y="6.5" width="7" height="7.5" fill="#e6e6e6" stroke="#777" stroke-width="1.2"/><path d="M9.5 1 V4 H12.5" fill="none" stroke="#777" stroke-width="1"/></svg>
<div class="a" style="left:1461.8px;top:712.5px;width:8px;height:8px;background:#9a9a9a;border-radius:4px;"></div>
<div class="a" style="left:1356px;top:737px;width:139px;height:1px;background:#e0e0e0;"></div>
<div class="a" style="left:1356px;top:745px;width:50px;height:20px;overflow:hidden"><div class="t" style="left:-8.5px;top:3.7px;font-size:12.5px;color:#a2a2a2;transform:scaleX(0.995);">Deckkraft:</div>
</div>
<div class="a" style="left:1408.4px;top:746px;width:61.6px;height:16.5px;background:#fdfdfd;border:1px solid #e6e6e6;"></div>
<div class="a" style="left:1453px;top:747px;width:1px;height:14.5px;background:#e9e9e9;"></div>
<div class="t" style="left:1413.3px;top:748.5px;font-size:12.5px;color:#5c5c5c;transform:scaleX(0.929);">100%</div>
<svg class="a" style="left:1457px;top:752px;" width="9" height="6" viewBox="0 0 9 6"><path d="M1 1 L4.5 4.5 L8 1" stroke="#c4c4c4" stroke-width="1" fill="none"/></svg>
<div class="a" style="left:1408.4px;top:778px;width:61.6px;height:16.5px;background:#fdfdfd;border:1px solid #e6e6e6;"></div>
<div class="a" style="left:1453px;top:779px;width:1px;height:14.5px;background:#e9e9e9;"></div>
<div class="t" style="left:1413.3px;top:780.5px;font-size:12.5px;color:#5c5c5c;transform:scaleX(0.929);">100%</div>
<svg class="a" style="left:1457px;top:784px;" width="9" height="6" viewBox="0 0 9 6"><path d="M1 1 L4.5 4.5 L8 1" stroke="#c4c4c4" stroke-width="1" fill="none"/></svg>
<div class="a" style="left:1356px;top:770px;width:139px;height:1px;background:#e0e0e0;"></div>
<div class="t" style="left:1367.4px;top:780.2px;font-size:12.5px;color:#b0b0b0;transform:scaleX(0.878);">Fläche:</div>
<div class="a" style="left:1356px;top:805px;width:120px;height:104px;background:#b5b5b5;"></div>
<div class="a" style="left:1476px;top:805px;width:18px;height:104px;background:#e2e2e2;"></div>
<svg class="a" style="left:1445.5px;top:850px;" width="13" height="14" viewBox="0 0 13 14"><rect x="1" y="5.6" width="11" height="7.6" rx="1" fill="none" stroke="#222" stroke-width="1.5"/><path d="M3.3 5.6 V3.8 Q3.3 1 6.5 1 Q9.7 1 9.7 3.8 V5.6" fill="none" stroke="#222" stroke-width="1.4"/><rect x="5.5" y="8.3" width="2" height="2.2" fill="#222"/></svg>
<div class="a" style="left:1356px;top:915px;width:139px;height:1px;background:#e2e2e2;"></div>
<svg class="a" style="left:1354px;top:923.5px;" width="18" height="17" viewBox="0 0 18 17"><circle cx="7.5" cy="7" r="5.6" fill="#f4f4f4" stroke="#222" stroke-width="1.5"/><path d="M11.5 3 A5.6 5.6 0 0 1 3.5 11 Z" fill="#222"/><path d="M12 13.5 H17 L14.5 16 Z" fill="#222"/></svg>
<svg class="a" style="left:1384.5px;top:924px;" width="16" height="13" viewBox="0 0 16 13"><path d="M1 2.2 Q1 1 2.2 1 H6.2 L7.8 3 H13.8 Q15 3 15 4.2 V11 Q15 12 13.8 12 H2.2 Q1 12 1 11 Z" fill="#d2d2d2" stroke="#333" stroke-width="1.4"/></svg>
<svg class="a" style="left:1417px;top:923.5px;" width="14" height="14" viewBox="0 0 14 14"><path d="M1.5 1.5 H12.5 V12.5 H6 L1.5 8 Z" fill="none" stroke="#333" stroke-width="1.5"/><path d="M1.5 8 H6 V12.5 Z" fill="#f6f6f6" stroke="#333" stroke-width="1.2"/><path d="M10.5 3.5 H12.5 V12.5 H8 V10.5 H10.5 Z" fill="#333"/></svg>
<svg class="a" style="left:1449px;top:923px;" width="12" height="15" viewBox="0 0 12 15"><path d="M1.8 4 H10.2 L9.6 14 H2.4 Z" fill="none" stroke="#a5a5a5" stroke-width="1.2"/><path d="M0.5 3.6 H11.5 M4 3.2 V1.2 H8 V3.2" fill="none" stroke="#a5a5a5" stroke-width="1.2"/><path d="M4.2 6 V12 M6 6 V12 M7.8 6 V12" stroke="#a5a5a5" stroke-width="1"/></svg>
<div class="a" style="left:144px;top:40px;width:1212px;height:21px;background:#fff;"></div>
<div class="t" style="left:149.0px;top:44.6px;font-size:11px;color:#222;transform:scaleX(0.808);">Camera Raw 11.1 - Canon EOS 70D</div>
<div class="a" style="left:144px;top:61px;width:1212px;height:861px;background:#f0f0f0;"></div>
<div class="a" style="left:153px;top:71px;width:1193px;height:792px;background:#f0f0f0;"></div>
<div class="a" style="left:154px;top:72px;width:895px;height:36px;background:#f0f0f0;"></div>
<div class="a" style="left:154px;top:108px;width:895px;height:726px;background:#969696;"></div>
<div class="a" style="left:154px;top:108px;width:895px;height:3px;background:linear-gradient(#8a8a8a,#969696);"></div>
<div class="a" style="left:364px;top:116px;width:475px;height:711px;background:#1c1c1c;"></div>
<div class="a" style="left:365px;top:117px;width:473px;height:709px;background:radial-gradient(ellipse 55% 42% at 55% 36%,rgba(234,238,245,0.9),rgba(234,238,245,0) 100%),linear-gradient(180deg,#e2e5e8 0%,#e4e7ea 20%,#e8ebef 40%,#eef0f4 51%,#f3f4f7 60%,#f6f6f8 72%,#f8f8fa 100%);overflow:hidden"><div class="a" style="left:0;top:0;width:473px;height:709px;background:linear-gradient(90deg,rgba(212,218,218,0.45) 0%,rgba(214,220,220,0) 22%,rgba(214,220,220,0) 80%,rgba(212,218,218,0.40) 100%);-webkit-mask-image:linear-gradient(180deg,#000 0%,#000 48%,transparent 78%);mask-image:linear-gradient(180deg,#000 0%,#000 48%,transparent 78%)"></div><svg class="a" style="left:85px;top:413px" width="320" height="180" viewBox="0 0 1500 844"><defs>
<filter id="bl" x="-10%" y="-10%" width="120%" height="120%"><feGaussianBlur stdDeviation="2.4"/></filter>
<filter id="bl2" x="-10%" y="-10%" width="120%" height="120%"><feGaussianBlur stdDeviation="7"/></filter>
<filter id="sh" x="-20%" y="-40%" width="140%" height="180%"><feGaussianBlur stdDeviation="24"/></filter>
<filter id="sh2" x="-20%" y="-40%" width="140%" height="180%"><feGaussianBlur stdDeviation="10"/></filter>
<linearGradient id="st1" gradientUnits="userSpaceOnUse" x1="420" y1="200" x2="760" y2="640"><stop offset="0" stop-color="#383d5a"/><stop offset="0.3" stop-color="#4a4d6a"/><stop offset="0.62" stop-color="#2f3450"/><stop offset="1" stop-color="#232940"/></linearGradient>
<linearGradient id="st2" gradientUnits="userSpaceOnUse" x1="850" y1="80" x2="1200" y2="400"><stop offset="0" stop-color="#343a56"/><stop offset="0.4" stop-color="#444864"/><stop offset="0.75" stop-color="#2b304b"/><stop offset="1" stop-color="#242a42"/></linearGradient>
<linearGradient id="fb1" gradientUnits="userSpaceOnUse" x1="620" y1="480" x2="1140" y2="640"><stop offset="0" stop-color="#131c28"/><stop offset="0.45" stop-color="#223141"/><stop offset="1" stop-color="#2c3d4d"/></linearGradient>
<linearGradient id="fb2" gradientUnits="userSpaceOnUse" x1="1030" y1="300" x2="1430" y2="450"><stop offset="0" stop-color="#121b27"/><stop offset="0.5" stop-color="#22313f"/><stop offset="1" stop-color="#2d3e4d"/></linearGradient>
</defs>
<g filter="url(#sh)" opacity="0.38"><path d="M60 410 L300 580 L620 740 L900 790 L1150 720 L1250 610 L1430 540 L1490 440 L1380 300 L900 360 Z" fill="#b6b5c8"/></g>
<g filter="url(#sh2)" opacity="0.45"><path d="M90 420 L420 630 L700 752 L920 764 L1100 700 L1170 630 L1300 560 L1420 512 L1450 450 L1000 640 L600 680 Z" fill="#8c8aa6"/></g>
<g filter="url(#bl)">
<!-- rear sandal sole -->
<path d="M440 165 Q448 132 520 115 Q640 96 830 128 L1310 252 Q1395 315 1435 385 Q1455 445 1415 492 Q1340 530 1250 540 Q1160 548 1120 560 L990 500 L800 330 L445 205 Z" fill="#1f2a38"/>
<path d="M1120 520 Q1250 515 1340 495 Q1420 470 1436 425" fill="none" stroke="#33455a" stroke-width="6" opacity="0.9"/>
<path d="M455 160 Q470 130 560 118 Q700 104 830 134 L830 232 L620 215 Q500 200 455 160 Z" fill="#2b3b4c"/>
<path d="M1018 420 Q1072 356 1150 308 Q1200 284 1250 270 L1312 260 Q1372 314 1420 385 Q1436 428 1400 458 Q1320 482 1200 490 Q1100 482 1040 462 Z" fill="url(#fb2)"/>
<!-- rear strap -->
<path d="M798 218 Q822 140 880 95 Q950 52 1010 48 Q1050 50 1065 62 Q1150 112 1250 188 L1312 256 Q1250 264 1150 302 Q1068 350 1020 412 L1000 442 Q905 382 835 290 Z" fill="url(#st2)"/>
<path d="M798 213 L861 103 L940 63 L964 79 L877 126 L829 225 Z" fill="#3a82b0"/>
<path d="M861 103 L940 63 L955 72 L880 112 Z" fill="#6aa9cf"/>
<path d="M877 126 L964 79 L1020 100 L975 150 L905 172 Z" fill="#2c4f7c" opacity="0.8"/>
<path d="M806 231 L972 160 L980 168 L812 242 Z" fill="#7aa6c8" opacity="0.55"/>
<path d="M875 316 L970 255 L1020 316 L1012 324 L968 270 L882 326 Z" fill="#6f9cc0" opacity="0.55"/>
<path d="M1049 197 L1060 195 L1104 330 L1145 336 L1143 344 L1096 338 Z" fill="#7ea8ca" opacity="0.55"/>
<path d="M1075 262 L1140 236 L1145 244 L1080 272 Z" fill="#6f9cc0" opacity="0.55"/>
<path d="M1082 186 L1272 250 L1308 256 L1250 262 L1180 228 Z" fill="#35658f" opacity="0.8"/>
<path d="M885 322 L968 268 L1012 322 L1004 420 L990 432 Z" fill="#262c48"/>
<path d="M940 400 L1000 395 L990 436 Z" fill="#3a7fb0"/>
<!-- front sandal sole -->
<path d="M78 300 Q84 252 160 228 Q260 204 440 248 L1000 440 Q1080 498 1130 560 Q1160 612 1138 640 Q1090 690 965 727 Q860 756 795 752 Q720 748 665 736 Q580 712 515 681 Q350 592 200 480 Q110 425 90 400 Z" fill="#222e3d"/>
<path d="M92 368 Q250 468 420 560 Q560 640 715 676 Q815 696 965 670 Q1080 636 1142 590" fill="none" stroke="#3a4c60" stroke-width="7" opacity="0.9"/><path d="M92 386 Q250 490 430 592 Q600 690 800 726 Q960 716 1100 655" fill="none" stroke="#18212d" stroke-width="5" opacity="0.7"/>
<!-- front heel footbed -->
<path d="M92 300 Q100 258 170 238 Q270 214 440 256 L472 268 L335 442 Q200 392 92 300 Z" fill="#2d3e4f"/>
<path d="M92 300 Q200 392 335 442 L330 458 Q190 412 88 318 Z" fill="#3a4c5f"/>
<!-- front footbed toe -->
<path d="M612 606 Q650 548 760 500 Q880 456 1000 448 Q1072 500 1120 560 Q1144 596 1090 622 Q965 668 815 688 Q715 672 640 628 Z" fill="url(#fb1)"/>
<!-- front strap -->
<path d="M326 446 Q338 396 420 300 Q505 228 600 186 Q680 160 735 160 Q792 212 840 300 Q915 384 1000 440 Q880 456 760 498 Q668 548 620 608 L598 652 Q540 604 420 540 Q340 504 326 482 Z" fill="url(#st1)"/>
<path d="M328 470 Q338 396 420 300 Q505 228 600 186" fill="none" stroke="#5f93bf" stroke-width="5" opacity="0.75"/><path d="M1000 440 Q880 456 760 498 Q668 548 620 608 L598 652" fill="none" stroke="#86b4d8" stroke-width="5" opacity="0.8"/><path d="M1312 256 Q1250 264 1150 302 Q1068 350 1020 412" fill="none" stroke="#5b86ae" stroke-width="4" opacity="0.7"/><path d="M394 339 L473 252 L489 284 L458 315 L489 339 L402 394 L347 418 Z" fill="#3a7db0"/>
<path d="M473 252 L489 284 L458 315 L428 302 Z" fill="#7db6da"/>
<path d="M592 193 L679 161 L725 163 L762 226 L736 252 L694 205 L647 205 Z" fill="#4b8fbf"/>
<path d="M600 190 L679 163 L702 180 L650 200 Z" fill="#93c3e0"/>
<path d="M736 252 L762 226 L838 300 L810 310 Z" fill="#2f6a9c"/>
<path d="M592 284 L615 272 L726 311 L734 331 L687 442 L663 462 L537 442 L525 418 L544 394 L600 371 L608 331 L592 308 Z" fill="#a8c7dc"/>
<path d="M612 296 L622 288 L716 320 L704 340 L672 338 L656 372 L618 364 L622 330 Z" fill="#3a4262"/>
<path d="M548 418 L560 400 L612 380 L652 388 L668 352 L700 350 L708 360 L676 436 L658 450 L552 434 Z" fill="#9fc0d8" opacity="0.9"/>
<path d="M817 379 L884 418 L950 438 L805 452 L781 466 Z" fill="#3a89ba"/>
<path d="M339 513 L386 477 L442 552 L418 576 L363 537 Z" fill="#6c87a6"/>
<path d="M552 552 L615 560 L650 548 L600 634 L568 602 Z" fill="#3b7eb2"/>
<path d="M468 424 L520 442 L566 606 L540 592 L472 470 Z" fill="#242b46"/>
<path d="M470 425 L484 420 L548 598 L538 596 Z" fill="#7ba6ca" opacity="0.55"/>
<path d="M420 480 L520 440 L526 450 L428 490 Z" fill="#6a8db2" opacity="0.8"/>
</g>
<g fill="none" stroke="#fdfdfd" stroke-width="14"><ellipse cx="260" cy="336" rx="17" ry="14.5" transform="rotate(-10 260 336)"/><ellipse cx="303" cy="351" rx="23" ry="19" transform="rotate(-10 303 351)"/></g>
</svg></div>
<div class="a" style="left:159px;top:77.5px;width:29.5px;height:25.5px;background:#c3c3c3;"></div>
<svg class="a" style="left:160px;top:77px;" width="26" height="26" viewBox="0 0 26 26"><g transform="translate(13,13) scale(1)"><circle cx="-2" cy="-2" r="6.2" fill="none" stroke="#242424" stroke-width="1.5"/><path d="M2.6 2.8 L8.5 8.6" stroke="#242424" stroke-width="2.2" stroke-linecap="round"/><path d="M-6 -2.5 Q-5.5 -6 -2 -6.3" fill="none" stroke="#242424" stroke-width="0.9"/></g></svg>
<svg class="a" style="left:189px;top:77px;" width="26" height="26" viewBox="0 0 26 26"><g transform="translate(13,13) scale(1)"><path d="M-3 1 V-6 Q-3 -7.5 -1.7 -7.5 Q-0.5 -7.5 -0.5 -6 V-7.7 Q-0.5 -9.2 0.8 -9.2 Q2.1 -9.2 2.1 -7.7 V-6.5 Q2.1 -8 3.4 -8 Q4.7 -8 4.7 -6.5 V-4.4 Q4.7 -5.8 5.9 -5.8 Q7.2 -5.8 7.2 -4.4 V3 Q7.2 9 1 9 Q-3 9 -5 5.8 L-8.4 0.6 Q-9 -0.8 -7.8 -1.3 Q-6.6 -1.7 -5.6 -0.5 L-3 2.8 M-0.5 -6 V0 M2.1 -6.5 V0 M4.7 -4.4 V0.5" fill="none" stroke="#242424" stroke-width="1.25" stroke-linejoin="round" stroke-linecap="round"/></g></svg>
<svg class="a" style="left:230px;top:77.5px;" width="26" height="26" viewBox="0 0 26 26"><g transform="translate(13,13) scale(0.88)"><path d="M-6 9 L-8 7 L1.5 -2.5 L3.5 -0.5 Z" fill="#9a9a9a" stroke="#242424" stroke-width="1.2"/><path d="M0 -5 L6 1 L7.5 -0.5 L5.8 -2.3 L8.5 -5 Q10 -7.5 8 -9.5 Q6 -11 3.8 -9.5 L1.2 -6.9 L-0.5 -8.5 L-2 -7 Z" fill="#242424"/></g></svg>
<svg class="a" style="left:259px;top:77.5px;" width="26" height="26" viewBox="0 0 26 26"><g transform="translate(13,13) scale(0.9)"><g transform="translate(3,0)"><path d="M-6 9 L-8 7 L1.5 -2.5 L3.5 -0.5 Z" fill="#f0f0f0" stroke="#242424" stroke-width="1.2"/><path d="M0 -5 L6 1 L7.5 -0.5 L5.8 -2.3 L8.5 -5 Q10 -7.5 8 -9.5 Q6 -11 3.8 -9.5 L1.2 -6.9 L-0.5 -8.5 L-2 -7 Z" fill="#242424"/></g><path d="M-7.5 -10 L-6.3 -7 L-3.3 -5.8 L-6.3 -4.6 L-7.5 -1.6 L-8.7 -4.6 L-11.7 -5.8 L-8.7 -7 Z" fill="none" stroke="#242424" stroke-width="1"/></g></svg>
<svg class="a" style="left:289px;top:77px;" width="26" height="26" viewBox="0 0 26 26"><g transform="translate(13,13) scale(1)"><circle cx="2.5" cy="1.8" r="4.6" fill="none" stroke="#242424" stroke-width="1.5"/><circle cx="2.5" cy="1.8" r="1.8" fill="#242424"/><path d="M-6 -9 V-2.5 M-9.3 -5.7 H-2.7" stroke="#242424" stroke-width="1.1" stroke-dasharray="2.2 1.4"/><path d="M7.5 7.5 H11.5 L9.5 9.7 Z" fill="#242424"/></g></svg>
<svg class="a" style="left:329px;top:76.5px;" width="26" height="26" viewBox="0 0 26 26"><g transform="translate(13,13) scale(0.9)"><path d="M-4.5 -9.5 V4.5 H9.5 M-9.5 -4.5 H4.5 V9.5" fill="none" stroke="#242424" stroke-width="2"/><path d="M-11.5 -4.5 H-9 M7.5 4.5 H9" stroke="#242424" stroke-width="2"/><path d="M8 9 H12 L10 11.2 Z" fill="#242424"/></g></svg>
<svg class="a" style="left:360px;top:77px;" width="26" height="26" viewBox="0 0 26 26"><g transform="translate(13,13) scale(1)"><rect x="-8.5" y="-0.5" width="17" height="7" fill="#8d8d8d" stroke="#242424" stroke-width="1.1"/><rect x="-3" y="0.8" width="6" height="3" fill="#f0f0f0" stroke="#242424" stroke-width="0.8"/><path d="M-5.5 -0.5 V6.5 M5.5 -0.5 V6.5" stroke="#242424" stroke-width="0.9"/><path d="M-6 -3.5 Q0 -9 6 -3.5" fill="none" stroke="#777" stroke-width="1.1" stroke-dasharray="1.4 1.4"/></g></svg>
<svg class="a" style="left:391px;top:77px;" width="26" height="26" viewBox="0 0 26 26"><g transform="translate(13,13) scale(1)"><path d="M-5.5 -7.5 L5.5 -6 L6 6 L-6 7.5 Z" fill="none" stroke="#242424" stroke-width="1.4"/><path d="M-2 -7 L-2.2 7 M2 -6.5 L2.2 6.5 M-5.7 -2.5 L5.7 -2 M-5.9 2.5 L5.9 2" stroke="#242424" stroke-width="0.9"/><circle cx="-5.5" cy="-7.5" r="1.6" fill="#f0f0f0" stroke="#242424"/><circle cx="5.5" cy="-6" r="1.6" fill="#f0f0f0" stroke="#242424"/><circle cx="6" cy="6" r="1.6" fill="#f0f0f0" stroke="#242424"/><circle cx="-6" cy="7.5" r="1.6" fill="#f0f0f0" stroke="#242424"/></g></svg>
<svg class="a" style="left:430px;top:77px;" width="26" height="26" viewBox="0 0 26 26"><g transform="translate(13,13) scale(1)"><path d="M8.5 -9.5 Q10 -9 9.5 -7.5 L2 3 L-0.7 1 Z" fill="#242424"/><path d="M-1.8 2.2 L1.1 4.4 Q0 8.5 -4 9 Q-7 9.3 -9 8.5 Q-6.3 7 -5.8 5 Q-4.7 1.8 -1.8 2.2 Z" fill="#242424"/><circle cx="-6" cy="-6" r="1.1" fill="#555"/><circle cx="-9" cy="-1" r="1.2" fill="#555"/><circle cx="5.5" cy="5.5" r="1.2" fill="#555"/><circle cx="7.5" cy="1" r="0.9" fill="#777"/><circle cx="-3" cy="-8.5" r="0.8" fill="#777"/></g></svg>
<svg class="a" style="left:460px;top:77px;" width="26" height="26" viewBox="0 0 26 26"><g transform="translate(13,13) scale(1)"><path d="M-8.5 -9 V-1.5 M-12.2 -5.2 H-4.8" stroke="#242424" stroke-width="1.2"/><path d="M-5.5 3.5 Q2.5 -4.5 10.5 3.5 Q2.5 10 -5.5 3.5 Z" fill="#242424"/><circle cx="2.5" cy="3" r="2.9" fill="#f0f0f0"/><circle cx="2.5" cy="3" r="1.6" fill="#242424"/></g></svg>
<svg class="a" style="left:491px;top:77px;" width="26" height="26" viewBox="0 0 26 26"><g transform="translate(13,13) scale(1)"><path d="M8.5 -9.5 Q10 -9 9.5 -7.5 L2 3 L-0.7 1 Z" fill="#242424"/><path d="M-1.8 2.2 L1.1 4.4 Q0 8.5 -4 9 Q-7 9.3 -9 8.5 Q-6.3 7 -5.8 5 Q-4.7 1.8 -1.8 2.2 Z" fill="#242424"/></g></svg>
<svg class="a" style="left:521px;top:77px;" width="26" height="26" viewBox="0 0 26 26"><g transform="translate(13,13) scale(1)"><defs><linearGradient id="gf" x1="0" x2="0" y1="0" y2="1"><stop offset="0" stop-color="#222"/><stop offset="1" stop-color="#e8e8e8"/></linearGradient></defs><rect x="-6" y="-8" width="12" height="15.5" fill="url(#gf)" stroke="#242424" stroke-width="1.2"/></g></svg>
<svg class="a" style="left:550.6px;top:77px;" width="26" height="26" viewBox="0 0 26 26"><g transform="translate(13,13) scale(1)"><ellipse cx="0" cy="0" rx="5.6" ry="7.6" fill="none" stroke="#242424" stroke-width="1.3"/></g></svg>
<svg class="a" style="left:587px;top:77px;" width="26" height="26" viewBox="0 0 26 26"><g transform="translate(13,13) scale(1)"><path d="M-4 -4.5 H8.5 M-4 0 H8.5 M-4 4.5 H8.5" stroke="#242424" stroke-width="1.6"/><rect x="-8.5" y="-5.4" width="2" height="1.8" fill="#242424"/><rect x="-8.5" y="-0.9" width="2" height="1.8" fill="#242424"/><rect x="-8.5" y="3.6" width="2" height="1.8" fill="#242424"/></g></svg>
<svg class="a" style="left:616.6px;top:78px;" width="26" height="26" viewBox="0 0 26 26"><g transform="translate(13,13) scale(1)"><path d="M-2.5 -6.5 A7 7 0 1 1 -6.8 1.2" fill="none" stroke="#242424" stroke-width="1.5"/><path d="M-6.5 -6.2 L-0.5 -9.5 L-1 -3 Z" fill="#242424"/></g></svg>
<svg class="a" style="left:643px;top:78px;" width="26" height="26" viewBox="0 0 26 26"><g transform="translate(13,13) scale(1)"><path d="M2.5 -6.5 A7 7 0 1 0 6.8 1.2" fill="none" stroke="#242424" stroke-width="1.5"/><path d="M6.5 -6.2 L0.5 -9.5 L1 -3 Z" fill="#242424"/></g></svg>
<svg class="a" style="left:1018px;top:77px;" width="26" height="26" viewBox="0 0 26 26"><g transform="translate(13,13) scale(1)"><path d="M-9 -7.5 H5 V-3 M5 5 V8 H-9 Z" fill="none" stroke="#242424" stroke-width="1.4"/><path d="M-9 -7.5 V8 M-9 -4.8 H5" stroke="#242424" stroke-width="1.4"/><path d="M-3 1 H7" stroke="#242424" stroke-width="1.8"/><path d="M6 -2.6 L10.5 1 L6 4.6 Z" fill="#242424"/><path d="M-1.2 -1.6 L-4.4 1 L-1.2 3.6 Z" fill="#242424"/></g></svg>
<div class="a" style="left:1056px;top:72px;width:289px;height:116px;background:#9f9f9f;"></div>
<div class="a" style="left:1049px;top:72px;width:7px;height:790px;background:#f0f0f0;"></div>
<svg class="a" style="left:1056px;top:72px;" width="289" height="116" viewBox="0 0 289 116"><defs><clipPath id="hc"><rect x="0" y="0" width="289" height="111.3"/></clipPath></defs><g clip-path="url(#hc)"><path d="M11.5 112 V97.5 L12.6 99 L13.2 105.5 L15.5 107.5 L17 112 Z" fill="#e81010"/><path d="M60 112 L70 108.6 L82 106.2 L92 105.4 L100 106 L104 112 Z" fill="#e81010"/><path d="M92 112 L96 105.6 L104 105.2 L112 106 L120 108 L124 112 Z" fill="#20c030"/><path d="M90 112 L96 107.4 L104 107 L110 108.4 L114 112 Z" fill="#f4e800"/><path d="M112 112 L118 106.8 L130 107.2 L150 108.6 L175 110 L190 112 Z" fill="#20c8e8"/><path d="M140 112 L150 108.6 L165 109 L185 110 L205 110.8 L220 112 Z" fill="#1840d8"/><path d="M14 112 L17 108.6 L60 109.6 L80 108.4 L96 107.6 L110 108.4 L140 109.8 L180 110.8 L236 111.2 V112 Z" fill="#fff"/><path d="M235.7 112 L238.5 109.5 L241 101 L243.2 73.3 L246.8 52 L249.2 30.7 L250.2 6.1 H253 V112 Z" fill="#f00808"/><path d="M240 112 L242.5 104 L245.3 84 L249.6 52 L251.7 20 L252.4 6.1 H259 V112 Z" fill="#fff200"/><path d="M246.4 112 L248 104 L250.7 84 L254.9 52 L257 30.7 L258.1 6.1 H269 V112 Z" fill="#fff"/><path d="M258.1 6.1 H262 L263 30 L264 52 L262.6 47 L261.6 36 L260 30 L259 18 Z" fill="#20d8f0"/><path d="M261.3 6.1 H265.2 V26 L264.8 40 L264 53 L263.2 40 L262.3 26 Z" fill="#1030d8"/><path d="M266.7 6.1 H268.8 V17 H266.7 Z" fill="#fff200"/><path d="M268.8 16.8 H272 V112 H268.8 Z" fill="#0a20e0"/></g><rect x="11.5" y="110.7" width="265" height="1.3" fill="#111"/><rect x="0.5" y="0.5" width="17" height="15.5" fill="#a4a4a4" stroke="#b4b4b4" stroke-width="0.6"/><path d="M9 2.5 L15.5 9.5 Q9 15 2.5 9.5 Z" fill="#f40000"/><rect x="271.5" y="0.5" width="17" height="15.5" fill="#a4a4a4" stroke="#b4b4b4" stroke-width="0.6"/><path d="M280 2.5 L286.5 9.5 Q280 15 273.5 9.5 Z" fill="#050505"/></svg>
<div class="t" style="left:1079.0px;top:194.7px;font-size:12px;color:#1c1c1c;transform:scaleX(0.930);">R:</div>
<div class="t" style="left:1112.5px;top:194.7px;font-size:12px;color:#1c1c1c;transform:scaleX(0.950);">---</div>
<div class="t" style="left:1079.0px;top:211.1px;font-size:12px;color:#1c1c1c;transform:scaleX(0.930);">G:</div>
<div class="t" style="left:1112.5px;top:211.1px;font-size:12px;color:#1c1c1c;transform:scaleX(0.950);">---</div>
<div class="t" style="left:1079.0px;top:227.6px;font-size:12px;color:#1c1c1c;transform:scaleX(0.930);">B:</div>
<div class="t" style="left:1112.5px;top:227.6px;font-size:12px;color:#1c1c1c;transform:scaleX(0.950);">---</div>
<div class="a" style="left:1142px;top:192px;width:1px;height:50px;background:#e2e2e2;"></div>
<div class="t" style="left:1202.8px;top:202.1px;font-size:12px;color:#1c1c1c;transform:scaleX(0.930);">f/11</div>
<div class="t" style="left:1234.0px;top:202.1px;font-size:12px;color:#1c1c1c;transform:scaleX(0.930);">1/125 s</div>
<div class="t" style="left:1179.7px;top:222.7px;font-size:12px;color:#1c1c1c;transform:scaleX(0.930);">ISO 100</div>
<div class="t" style="left:1234.0px;top:222.7px;font-size:12px;color:#1c1c1c;transform:scaleX(0.951);">18-300 bei 37 mm</div>
<div class="a" style="left:1056px;top:247px;width:289px;height:26px;background:#d3d3d3;"></div>
<div class="a" style="left:1059px;top:248px;width:21px;height:25px;background:#f0f0f0;"></div>
<div class="a" style="left:1056px;top:247px;width:3px;height:26px;background:#dcdcdc;"></div>
<svg class="a" style="left:1060.6px;top:251px;" width="18" height="18" viewBox="0 0 18 18"><circle cx="9" cy="9" r="7.6" fill="#1e1e1e"/><path d="M16.48 10.32 L7.73 11.72" stroke="#f0f0f0" stroke-width="1.1"/><path d="M11.60 16.14 L6.01 9.26" stroke="#f0f0f0" stroke-width="1.1"/><path d="M4.11 14.82 L7.28 6.54" stroke="#f0f0f0" stroke-width="1.1"/><path d="M1.52 7.68 L10.27 6.28" stroke="#f0f0f0" stroke-width="1.1"/><path d="M6.40 1.86 L11.99 8.74" stroke="#f0f0f0" stroke-width="1.1"/><path d="M13.89 3.18 L10.72 11.46" stroke="#f0f0f0" stroke-width="1.1"/><circle cx="9" cy="9" r="2.2" fill="#f0f0f0"/></svg>
<svg class="a" style="left:1083.4px;top:251px;" width="18" height="18" viewBox="0 0 18 18"><rect x="1" y="2.5" width="16" height="13" fill="none" stroke="#1e1e1e" stroke-width="1.6"/><path d="M6.3 2.5 V15.5 M11.6 2.5 V15.5 M1 7 H17 M1 11.3 H17" stroke="#1e1e1e" stroke-width="1.3"/><path d="M1.5 15 L7 9 L16.5 3" stroke="#1e1e1e" stroke-width="1.8" fill="none"/></svg>
<svg class="a" style="left:1107px;top:251px;" width="18" height="18" viewBox="0 0 18 18"><path d="M0.8 16 L6.5 1.8 L10 10 L12.5 5 L17.2 16 Z" fill="#1e1e1e"/></svg>
<svg class="a" style="left:1129px;top:251px;" width="18" height="18" viewBox="0 0 18 18"><defs><linearGradient id="g4" x1="0" x2="1"><stop offset="0" stop-color="#111"/><stop offset="1" stop-color="#e8e8e8"/></linearGradient><linearGradient id="g4b" x1="0" x2="1"><stop offset="0" stop-color="#ddd"/><stop offset="1" stop-color="#111"/></linearGradient></defs><rect x="1.2" y="3" width="15.6" height="12.5" fill="#222"/><rect x="2.6" y="4.4" width="12.8" height="4.6" fill="url(#g4b)"/><rect x="2.6" y="9.6" width="12.8" height="4.6" fill="url(#g4)"/></svg>
<svg class="a" style="left:1152px;top:251px;" width="18" height="18" viewBox="0 0 18 18"><rect x="1.5" y="2.8" width="15" height="5" fill="#e8e8e8" stroke="#1e1e1e" stroke-width="1.3"/><rect x="1" y="10" width="16" height="6" fill="#1e1e1e"/></svg>
<svg class="a" style="left:1174.6px;top:251px;" width="18" height="18" viewBox="0 0 18 18"><path d="M3.5 2.5 Q0.5 9 3.5 15.5" stroke="#1e1e1e" stroke-width="1.8" fill="none"/><path d="M6 2 Q9.5 9 6 16 Q8.5 9 6 2 Z M5.6 2 H8 Q10.5 9 8 16 H5.6 Q8 9 5.6 2Z" fill="#1e1e1e"/><rect x="10.5" y="4" width="2.6" height="10" fill="#1e1e1e"/><path d="M14.6 3 Q17.5 9 14.6 15" stroke="#1e1e1e" stroke-width="1.8" fill="none"/></svg>
<div class="t" style="left:1200.0px;top:250.7px;font-size:18px;color:#1e1e1e;font-style:italic;transform:scaleX(1.071);">fx</div>
<svg class="a" style="left:1220.6px;top:251px;" width="18" height="18" viewBox="0 0 18 18"><rect x="2.2" y="2" width="13.6" height="14" fill="none" stroke="#1e1e1e" stroke-width="1.5"/><path d="M5.6 2 V16 M12.4 2 V16 M5.6 9 H12.4" stroke="#1e1e1e" stroke-width="1.3"/><path d="M2.2 5.5 H5.6 M2.2 9 H5.6 M2.2 12.5 H5.6 M12.4 5.5 H15.8 M12.4 9 H15.8 M12.4 12.5 H15.8" stroke="#1e1e1e" stroke-width="1.1"/></svg>
<svg class="a" style="left:1243px;top:251px;" width="18" height="18" viewBox="0 0 18 18"><path d="M1.5 4.2 H16.5 M1.5 9 H16.5 M1.5 13.8 H16.5" stroke="#1e1e1e" stroke-width="1.5"/><rect x="10" y="2" width="3" height="4.4" fill="#d3d3d3" stroke="#1e1e1e" stroke-width="1.2"/><rect x="4" y="6.8" width="3" height="4.4" fill="#d3d3d3" stroke="#1e1e1e" stroke-width="1.2"/><rect x="8.5" y="11.6" width="3" height="4.4" fill="#d3d3d3" stroke="#1e1e1e" stroke-width="1.2"/></svg>
<svg class="a" style="left:1266px;top:251px;" width="18" height="18" viewBox="0 0 18 18"><rect x="5" y="6" width="11.5" height="10.5" fill="none" stroke="#555" stroke-width="1"/><rect x="3.5" y="4.2" width="11.5" height="10.5" fill="#d3d3d3" stroke="#333" stroke-width="1"/><rect x="1.5" y="2" width="11.5" height="10.5" fill="#1e1e1e"/></svg>
<div class="t" style="left:1142.1px;top:277.1px;font-size:12px;color:#1c1c1c;transform:scaleX(0.932);">Grundeinstellungen</div>
<svg class="a" style="left:1329px;top:278px;" width="12" height="10" viewBox="0 0 12 10"><path d="M0.5 1.5 H11 M0.5 4 H11 M0.5 6.5 H11 M0.5 9 H11" stroke="#555" stroke-width="1.2"/></svg>
<div class="a" style="left:1056px;top:293px;width:276px;height:1px;background:#dedede;"></div>
<div class="a" style="left:1056px;top:294px;width:276px;height:568px;background:#f1f1f1;"></div>
<div class="a" style="left:1332px;top:294px;width:12px;height:568px;background:#f0f0f0;"></div>
<div class="a" style="left:1333px;top:303px;width:10px;height:535px;background:#cdcdcd;"></div>
<svg class="a" style="left:1332px;top:295px;" width="12" height="8" viewBox="0 0 12 8"><path d="M2 6 L6 2 L10 6" stroke="#555" stroke-width="1" fill="none"/></svg>
<svg class="a" style="left:1332px;top:850px;" width="12" height="8" viewBox="0 0 12 8"><path d="M2 2 L6 6 L10 2" stroke="#555" stroke-width="1" fill="none"/></svg>
<div class="t" style="left:1069.5px;top:304.4px;font-size:12px;color:#1c1c1c;transform:scaleX(0.930);">Behandlung:</div>
<svg class="a" style="left:1170px;top:303px;" width="15" height="15" viewBox="0 0 15 15"><circle cx="7.5" cy="7.5" r="6" fill="#fff" stroke="#7a7a7a" stroke-width="1"/><circle cx="7.5" cy="7.5" r="3.6" fill="#555"/><circle cx="7.5" cy="7.5" r="4.6" fill="none" stroke="#999" stroke-width="1.2"/></svg>
<div class="t" style="left:1190.8px;top:304.4px;font-size:12px;color:#1c1c1c;transform:scaleX(0.930);">Farbe</div>
<svg class="a" style="left:1228.5px;top:303px;" width="15" height="15" viewBox="0 0 15 15"><circle cx="7.5" cy="7.5" r="6" fill="#fcfcfc" stroke="#b5b5b5" stroke-width="1"/></svg>
<div class="t" style="left:1248.7px;top:304.4px;font-size:12px;color:#1c1c1c;transform:scaleX(0.907);">Schwarzweiß</div>
<div class="a" style="left:1063px;top:325px;width:263px;height:1px;background:#dfdfdf;"></div>
<div class="t" style="left:1069.5px;top:341.5px;font-size:12px;color:#1c1c1c;transform:scaleX(0.930);">Profil:</div>
<div class="a" style="left:1111px;top:336.5px;width:175px;height:18.5px;background:#fcfcfc;border:1px solid #d2d2d2;"></div>
<div class="t" style="left:1113.6px;top:340.1px;font-size:12px;color:#1c1c1c;transform:scaleX(0.930);">Adobe Farbe</div>
<svg class="a" style="left:1272px;top:342px;" width="10" height="7" viewBox="0 0 10 7"><path d="M1 1.2 L5 5.2 L9 1.2" stroke="#555" stroke-width="1.1" fill="none"/></svg>
<svg class="a" style="left:1294.5px;top:337px;" width="22" height="18" viewBox="0 0 22 18"><rect x="1" y="1" width="7.5" height="5.4" fill="none" stroke="#444" stroke-width="1.1"/><rect x="12.5" y="1" width="7.5" height="5.4" fill="none" stroke="#444" stroke-width="1.1"/><rect x="1" y="11" width="7.5" height="5.4" fill="none" stroke="#444" stroke-width="1.1"/><rect x="12.5" y="11" width="7.5" height="5.4" fill="none" stroke="#444" stroke-width="1.1"/></svg>
<div class="a" style="left:1063px;top:367px;width:263px;height:1px;background:#dfdfdf;"></div>
<div class="t" style="left:1069.5px;top:381.9px;font-size:12px;color:#1c1c1c;transform:scaleX(0.930);">Weißabgleich:</div>
<div class="a" style="left:1152.5px;top:377.5px;width:166.5px;height:17.5px;background:#fcfcfc;border:1px solid #d2d2d2;"></div>
<div class="t" style="left:1155.0px;top:380.4px;font-size:12px;color:#1c1c1c;transform:scaleX(0.930);">Benutzerdefiniert</div>
<svg class="a" style="left:1305px;top:382.5px;" width="10" height="7" viewBox="0 0 10 7"><path d="M1 1.2 L5 5.2 L9 1.2" stroke="#555" stroke-width="1.1" fill="none"/></svg>
<div class="a" style="left:1063px;top:484px;width:263px;height:1px;background:#dfdfdf;"></div>
<div class="t" style="left:1121.4px;top:494.1px;font-size:12px;color:#1c1c1c;transform:scaleX(0.924);text-decoration:underline;">Automatisch</div>
<div class="t" style="left:1213.7px;top:494.1px;font-size:12px;color:#1c1c1c;transform:scaleX(0.926);text-decoration:underline;">Standard</div>
<div class="a" style="left:1063px;top:717px;width:263px;height:1px;background:#dfdfdf;"></div>
<div class="t" style="left:1069.5px;top:410.9px;font-size:12px;color:#1c1c1c;transform:scaleX(0.930);">Farbtemperatur</div>
<div class="a" style="left:1273px;top:406.3px;width:46px;height:20.2px;background:#fff;border:1px solid #d5d5d5;"></div>
<div class="t" style="left:1277.5px;top:410.8px;font-size:12px;color:#1c1c1c;transform:scaleX(0.950);">5500</div>
<div class="a" style="left:1067.5px;top:429.9px;width:252px;height:3.4px;border-radius:2px;background:linear-gradient(90deg,#1414c8 0%,#3a3aa8 20%,#777 50%,#b8b440 80%,#f0e800 100%);box-shadow:0 0 0 0.7px #7c7c7c;"></div>
<svg class="a" style="left:1149.5px;top:427.1px;" width="13" height="13" viewBox="0 0 13 13"><path d="M6.5 1 L11.5 5.2 V11.5 H1.5 V5.2 Z" fill="#fafafa" stroke="#a9a9a9" stroke-width="1"/></svg>
<div class="t" style="left:1069.5px;top:445.9px;font-size:12px;color:#1c1c1c;transform:scaleX(0.930);">Farbton</div>
<div class="a" style="left:1273px;top:442px;width:46px;height:19px;background:#fff;border:1px solid #d5d5d5;"></div>
<div class="t" style="left:1277.5px;top:445.9px;font-size:12px;color:#1c1c1c;transform:scaleX(0.950);">-6</div>
<div class="a" style="left:1067.5px;top:465.6px;width:252px;height:3.4px;border-radius:2px;background:linear-gradient(90deg,#18b818 0%,#4a9a4a 22%,#777 50%,#a848a8 80%,#e000e0 100%);box-shadow:0 0 0 0.7px #7c7c7c;"></div>
<svg class="a" style="left:1179.2px;top:462.8px;" width="13" height="13" viewBox="0 0 13 13"><path d="M6.5 1 L11.5 5.2 V11.5 H1.5 V5.2 Z" fill="#fafafa" stroke="#a9a9a9" stroke-width="1"/></svg>
<div class="t" style="left:1069.5px;top:513.8px;font-size:12px;color:#1c1c1c;transform:scaleX(0.930);">Belichtung</div>
<div class="a" style="left:1273px;top:509.6px;width:46px;height:19.2px;background:#fff;border:1px solid #d5d5d5;"></div>
<div class="t" style="left:1277.5px;top:513.6px;font-size:12px;color:#1c1c1c;transform:scaleX(0.950);">+0,80</div>
<div class="a" style="left:1067.5px;top:532.5px;width:252px;height:3.4px;border-radius:2px;background:linear-gradient(90deg,#050505 0%,#222 25%,#777 55%,#ddd 85%,#fafafa 100%);box-shadow:0 0 0 0.7px #7c7c7c;"></div>
<svg class="a" style="left:1206.2px;top:529.7px;" width="13" height="13" viewBox="0 0 13 13"><path d="M6.5 1 L11.5 5.2 V11.5 H1.5 V5.2 Z" fill="#fafafa" stroke="#a9a9a9" stroke-width="1"/></svg>
<div class="t" style="left:1069.5px;top:546.8px;font-size:12px;color:#1c1c1c;transform:scaleX(0.930);">Kontrast</div>
<div class="a" style="left:1273px;top:542.3px;width:46px;height:19.5px;background:#fff;border:1px solid #d5d5d5;"></div>
<div class="t" style="left:1277.5px;top:546.5px;font-size:12px;color:#1c1c1c;transform:scaleX(0.950);">-13</div>
<div class="a" style="left:1067.5px;top:565.9px;width:252px;height:3.4px;border-radius:2px;background:linear-gradient(90deg,#7d7d7d 0%,#858585 38%,#4a4a4a 47%,#e8e8e8 52%,#d0d0d0 58%,#333 64%,#3a3a3a 72%,#eee 78%,#ddd 84%,#222 89%,#111 93%,#f4f4f4 96%,#111 100%);box-shadow:0 0 0 0.7px #7c7c7c;"></div>
<svg class="a" style="left:1170.1px;top:563.1px;" width="13" height="13" viewBox="0 0 13 13"><path d="M6.5 1 L11.5 5.2 V11.5 H1.5 V5.2 Z" fill="#fafafa" stroke="#a9a9a9" stroke-width="1"/></svg>
<div class="t" style="left:1069.5px;top:580.1px;font-size:12px;color:#1c1c1c;transform:scaleX(0.930);">Lichter</div>
<div class="a" style="left:1273px;top:575.5px;width:46px;height:19.5px;background:#fff;border:1px solid #d5d5d5;"></div>
<div class="t" style="left:1277.5px;top:579.7px;font-size:12px;color:#1c1c1c;transform:scaleX(0.950);">+14</div>
<div class="a" style="left:1067.5px;top:598.9px;width:252px;height:3.4px;border-radius:2px;background:linear-gradient(90deg,#6e6e6e 0%,#858585 45%,#cfcfcf 75%,#fafafa 100%);box-shadow:0 0 0 0.7px #7c7c7c;"></div>
<svg class="a" style="left:1204.2px;top:596.1px;" width="13" height="13" viewBox="0 0 13 13"><path d="M6.5 1 L11.5 5.2 V11.5 H1.5 V5.2 Z" fill="#fafafa" stroke="#a9a9a9" stroke-width="1"/></svg>
<div class="t" style="left:1069.5px;top:613.1px;font-size:12px;color:#1c1c1c;transform:scaleX(0.930);">Tiefen</div>
<div class="a" style="left:1273px;top:608.5px;width:46px;height:19.5px;background:#fff;border:1px solid #d5d5d5;"></div>
<div class="t" style="left:1277.5px;top:612.7px;font-size:12px;color:#1c1c1c;transform:scaleX(0.950);">+44</div>
<div class="a" style="left:1067.5px;top:632.3px;width:252px;height:3.4px;border-radius:2px;background:linear-gradient(90deg,#050505 0%,#1a1a1a 40%,#555 75%,#808080 100%);box-shadow:0 0 0 0.7px #7c7c7c;"></div>
<svg class="a" style="left:1241.5px;top:629.5px;" width="13" height="13" viewBox="0 0 13 13"><path d="M6.5 1 L11.5 5.2 V11.5 H1.5 V5.2 Z" fill="#fafafa" stroke="#a9a9a9" stroke-width="1"/></svg>
<div class="t" style="left:1069.5px;top:646.5px;font-size:12px;color:#1c1c1c;transform:scaleX(0.930);">Weiß</div>
<div class="a" style="left:1273px;top:642px;width:46px;height:19.5px;background:#fff;border:1px solid #d5d5d5;"></div>
<div class="t" style="left:1277.5px;top:646.2px;font-size:12px;color:#1c1c1c;transform:scaleX(0.950);">+6</div>
<div class="a" style="left:1067.5px;top:665.3px;width:252px;height:3.4px;border-radius:2px;background:linear-gradient(90deg,#6e6e6e 0%,#858585 45%,#cfcfcf 75%,#fafafa 100%);box-shadow:0 0 0 0.7px #7c7c7c;"></div>
<svg class="a" style="left:1194.1px;top:662.5px;" width="13" height="13" viewBox="0 0 13 13"><path d="M6.5 1 L11.5 5.2 V11.5 H1.5 V5.2 Z" fill="#fafafa" stroke="#a9a9a9" stroke-width="1"/></svg>
<div class="t" style="left:1069.5px;top:679.6px;font-size:12px;color:#1c1c1c;transform:scaleX(0.930);">Schwarz</div>
<div class="a" style="left:1273px;top:675px;width:46px;height:19.5px;background:#fff;border:1px solid #d5d5d5;"></div>
<div class="t" style="left:1277.5px;top:679.2px;font-size:12px;color:#1c1c1c;transform:scaleX(0.950);">+9</div>
<div class="a" style="left:1067.5px;top:698.9px;width:252px;height:3.4px;border-radius:2px;background:linear-gradient(90deg,#050505 0%,#1a1a1a 40%,#555 75%,#808080 100%);box-shadow:0 0 0 0.7px #7c7c7c;"></div>
<svg class="a" style="left:1197.8px;top:696.1px;" width="13" height="13" viewBox="0 0 13 13"><path d="M6.5 1 L11.5 5.2 V11.5 H1.5 V5.2 Z" fill="#fafafa" stroke="#a9a9a9" stroke-width="1"/></svg>
<div class="t" style="left:1069.5px;top:730.1px;font-size:12px;color:#1c1c1c;transform:scaleX(0.930);">Klarheit</div>
<div class="a" style="left:1273px;top:725.9px;width:46px;height:19.5px;background:#fff;border:1px solid #d5d5d5;"></div>
<div class="t" style="left:1277.5px;top:730.1px;font-size:12px;color:#1c1c1c;transform:scaleX(0.950);">+19</div>
<div class="a" style="left:1067.5px;top:749.3px;width:252px;height:3.4px;border-radius:2px;background:linear-gradient(90deg,#7d7d7d 0%,#858585 38%,#4a4a4a 47%,#e8e8e8 52%,#d0d0d0 58%,#333 64%,#3a3a3a 72%,#eee 78%,#ddd 84%,#222 89%,#111 93%,#f4f4f4 96%,#111 100%);box-shadow:0 0 0 0.7px #7c7c7c;"></div>
<svg class="a" style="left:1210.2px;top:746.5px;" width="13" height="13" viewBox="0 0 13 13"><path d="M6.5 1 L11.5 5.2 V11.5 H1.5 V5.2 Z" fill="#fafafa" stroke="#a9a9a9" stroke-width="1"/></svg>
<div class="t" style="left:1069.5px;top:765.4px;font-size:12px;color:#1c1c1c;transform:scaleX(0.930);">Dunst entfernen</div>
<div class="a" style="left:1273px;top:761px;width:46px;height:19.5px;background:#fff;border:1px solid #d5d5d5;"></div>
<div class="t" style="left:1277.5px;top:765.2px;font-size:12px;color:#1c1c1c;transform:scaleX(0.950);">+7</div>
<div class="a" style="left:1067.5px;top:784.8px;width:252px;height:3.4px;border-radius:2px;background:linear-gradient(90deg,#7d7d7d 0%,#858585 38%,#4a4a4a 47%,#e8e8e8 52%,#d0d0d0 58%,#333 64%,#3a3a3a 72%,#eee 78%,#ddd 84%,#222 89%,#111 93%,#f4f4f4 96%,#111 100%);box-shadow:0 0 0 0.7px #7c7c7c;"></div>
<svg class="a" style="left:1194.7px;top:782px;" width="13" height="13" viewBox="0 0 13 13"><path d="M6.5 1 L11.5 5.2 V11.5 H1.5 V5.2 Z" fill="#fafafa" stroke="#a9a9a9" stroke-width="1"/></svg>
<div class="t" style="left:1069.5px;top:800.6px;font-size:12px;color:#1c1c1c;transform:scaleX(0.930);">Dynamik</div>
<div class="a" style="left:1273px;top:796.6px;width:46px;height:18.9px;background:#fff;border:1px solid #d5d5d5;"></div>
<div class="t" style="left:1277.5px;top:800.5px;font-size:12px;color:#1c1c1c;transform:scaleX(0.950);">+13</div>
<div class="a" style="left:1067.5px;top:820.1px;width:252px;height:3.4px;border-radius:2px;background:linear-gradient(90deg,#6f6f6f 0%,#7a7a7a 50%,#72627a 58%,#9a3c72 64%,#d43838 68.5%,#d6c42a 73.5%,#3ab64a 79.5%,#28b4d4 86%,#2a3ad6 91.5%,#c42ac4 96%,#e02848 100%);box-shadow:0 0 0 0.7px #7c7c7c;"></div>
<svg class="a" style="left:1203.1px;top:817.3px;" width="13" height="13" viewBox="0 0 13 13"><path d="M6.5 1 L11.5 5.2 V11.5 H1.5 V5.2 Z" fill="#fafafa" stroke="#a9a9a9" stroke-width="1"/></svg>
<div class="t" style="left:1069.5px;top:836.1px;font-size:12px;color:#1c1c1c;transform:scaleX(0.930);">Sättigung</div>
<div class="a" style="left:1273px;top:832px;width:46px;height:19px;background:#fff;border:1px solid #d5d5d5;"></div>
<div class="t" style="left:1277.5px;top:835.9px;font-size:12px;color:#1c1c1c;transform:scaleX(0.950);">+4</div>
<div class="a" style="left:1067.5px;top:854.9px;width:252px;height:3.4px;border-radius:2px;background:linear-gradient(90deg,#6f6f6f 0%,#7a7a7a 50%,#72627a 58%,#9a3c72 64%,#d43838 68.5%,#d6c42a 73.5%,#3ab64a 79.5%,#28b4d4 86%,#2a3ad6 91.5%,#c42ac4 96%,#e02848 100%);box-shadow:0 0 0 0.7px #7c7c7c;"></div>
<svg class="a" style="left:1192px;top:852.1px;" width="13" height="13" viewBox="0 0 13 13"><path d="M6.5 1 L11.5 5.2 V11.5 H1.5 V5.2 Z" fill="#fafafa" stroke="#a9a9a9" stroke-width="1"/></svg>
<div class="a" style="left:154px;top:834px;width:895px;height:28px;background:#f0f0f0;"></div>
<svg class="a" style="left:164.5px;top:843.5px;" width="12" height="12" viewBox="0 0 12 12"><rect x="0.8" y="0.8" width="10.4" height="10.4" fill="#f6f6f6" stroke="#242424" stroke-width="1.3"/><path d="M3.2 6 H8.8" stroke="#242424" stroke-width="1.4"/></svg>
<svg class="a" style="left:182px;top:843.5px;" width="12" height="12" viewBox="0 0 12 12"><rect x="0.8" y="0.8" width="10.4" height="10.4" fill="#f6f6f6" stroke="#242424" stroke-width="1.3"/><path d="M3.2 6 H8.8 M6 3.2 V8.8" stroke="#242424" stroke-width="1.4"/></svg>
<div class="a" style="left:199.5px;top:840px;width:74.5px;height:17.5px;background:#ebebeb;border:1px solid #dadada;border-radius:2px;"></div>
<div class="a" style="left:256px;top:841px;width:17px;height:15.5px;background:#fbfbfb;"></div>
<div class="t" style="left:216.6px;top:844.3px;font-size:12px;color:#222;transform:scaleX(0.950);">25%</div>
<svg class="a" style="left:260px;top:846px;" width="10" height="7" viewBox="0 0 10 7"><path d="M1 1 L5 5 L9 1" stroke="#555" stroke-width="1.1" fill="none"/></svg>
<div class="t" style="left:453.0px;top:843.6px;font-size:12px;color:#1e1e1e;transform:scaleX(0.939);">Onlineshop_29.04.2019-294.cr2</div>
<svg class="a" style="left:945px;top:839.5px;" width="24" height="19" viewBox="0 0 24 19"><rect x="1.5" y="1.2" width="19" height="15.6" fill="#fafafa" stroke="#242424" stroke-width="1.4"/><path d="M6.5 4.5 L10.8 10 L15 4.5 M10.8 10 V14" stroke="#242424" stroke-width="1.5" fill="none"/><path d="M19.5 15.5 H23.5 L21.5 17.8 Z" fill="#242424"/></svg>
<svg class="a" style="left:972px;top:840px;" width="22" height="17" viewBox="0 0 22 17"><rect x="1" y="1" width="20" height="15" fill="#e2e2e2" stroke="#cdcdcd" stroke-width="1"/><path d="M7 6.5 H14 M12 4 L15 6.5 L12 9 M15 10.5 H8 M10 8 L7 10.5 L10 13" stroke="#c2c2c2" stroke-width="1.4" fill="none"/></svg>
<svg class="a" style="left:996px;top:840px;" width="22" height="17" viewBox="0 0 22 17"><rect x="1" y="1" width="20" height="15" fill="#e2e2e2" stroke="#cdcdcd" stroke-width="1"/><path d="M16 8.5 H9" stroke="#c2c2c2" stroke-width="2.2"/><path d="M10.5 4.8 L6.2 8.5 L10.5 12.2 Z" fill="#c2c2c2"/></svg>
<svg class="a" style="left:1022px;top:840px;" width="22" height="17" viewBox="0 0 22 17"><path d="M1 3.5 H21 M1 8.5 H21 M1 13.5 H21" stroke="#242424" stroke-width="1.5"/><rect x="13" y="1.3" width="3.4" height="4.4" fill="#f0f0f0" stroke="#242424" stroke-width="1.2"/><rect x="5" y="6.3" width="3.4" height="4.4" fill="#f0f0f0" stroke="#242424" stroke-width="1.2"/><rect x="11" y="11.3" width="3.4" height="4.4" fill="#f0f0f0" stroke="#242424" stroke-width="1.2"/></svg>
<div class="a" style="left:169.4px;top:880px;width:106.2px;height:26.4px;background:#f1f1f1;border:1px solid #b9b9b9;border-radius:13.2px;"></div>
<div class="t" style="left:179.0px;top:886.6px;font-size:13px;color:#1e1e1e;transform:scaleX(0.930);">Bild speichern...</div>
<div class="a" style="left:1012px;top:880px;width:98.4px;height:26.4px;background:#f1f1f1;border:1.4px solid #3a3a3a;border-radius:13.2px;"></div>
<div class="t" style="left:1022.8px;top:886.6px;font-size:13px;color:#1e1e1e;transform:scaleX(0.981);">Objekt öffnen</div>
<div class="a" style="left:1136.3px;top:880px;width:95.3px;height:26.4px;background:#f1f1f1;border:1px solid #b9b9b9;border-radius:13.2px;"></div>
<div class="t" style="left:1154.8px;top:886.6px;font-size:13px;color:#1e1e1e;transform:scaleX(0.916);">Abbrechen</div>
<div class="a" style="left:1257.5px;top:880px;width:72.5px;height:26.4px;background:#f1f1f1;border:1px solid #b9b9b9;border-radius:13.2px;"></div>
<div class="t" style="left:1278.4px;top:886.6px;font-size:13px;color:#1e1e1e;transform:scaleX(0.939);">Fertig</div>
<div class="t" style="left:581.0px;top:887.1px;font-size:12px;color:#1e1e1e;transform:scaleX(0.950);text-decoration:underline;">sRGB IEC61966-2.1; 8 Bit; 3648 x 5472 (20,0 MP); 300 ppi</div>
<div class="a" style="left:144px;top:921.5px;width:173px;height:1.5px;background:#cfcfcf;"></div>
<div class="a" style="left:317px;top:923.5px;width:778px;height:22px;background:#e2e2e2;"></div>
<div class="a" style="left:317px;top:923px;width:778px;height:2.4px;background:#858585;"></div>
<div class="a" style="left:1095px;top:923.5px;width:261px;height:22px;background:#efefef;"></div>
<div class="a" style="left:1114px;top:923px;width:1.4px;height:23px;background:#9a9a9a;"></div>
<div class="a" style="left:1162.6px;top:923px;width:1.4px;height:23px;background:#9a9a9a;"></div>
<div class="a" style="left:1163px;top:945px;width:333px;height:1px;background:#d2d2d2;"></div>
<svg class="a" style="left:1346px;top:917px;" width="8" height="8" viewBox="0 0 8 8"><path d="M7 1 V7 H1" stroke="#c8c8c8" stroke-width="1" fill="none"/><path d="M4.5 3.5 V4.5 H3.5" stroke="#c8c8c8" stroke-width="1" fill="none"/></svg>
<svg class="a" style="left:1256px;top:925px;" width="19" height="12" viewBox="0 0 19 12"><rect x="1" y="2.2" width="9.5" height="7.6" rx="3.8" fill="none" stroke="#8c8c8c" stroke-width="1.5"/><rect x="8.5" y="2.2" width="9.5" height="7.6" rx="3.8" fill="none" stroke="#8c8c8c" stroke-width="1.5"/><path d="M5.5 6 H13.5" stroke="#8c8c8c" stroke-width="1.5"/></svg>
<div class="t" style="left:1290.8px;top:921.7px;font-size:17px;color:#8c8c8c;font-style:italic;transform:scaleX(1.021);">fx</div>
<svg class="a" style="left:1303px;top:936px;" width="6" height="4" viewBox="0 0 6 4"><path d="M0.5 0.5 H5 L2.8 3.2 Z" fill="#8c8c8c"/></svg>
<svg class="a" style="left:1321px;top:924.5px;" width="16" height="12" viewBox="0 0 16 12"><rect x="0.5" y="0.5" width="15" height="11" fill="#1e1e1e"/><circle cx="8" cy="6" r="3.4" fill="#f4f4f4"/></svg>
<div class="a" style="left:153px;top:71px;width:1193.5px;height:792.5px;background:none;pointer-events:none;border-style:solid;border-color:#161616;border-width:1px 2px 2px 1px;box-shadow:inset 0 1px 0 rgba(0,0,0,0.35);"></div>
</div>
</body></html>
